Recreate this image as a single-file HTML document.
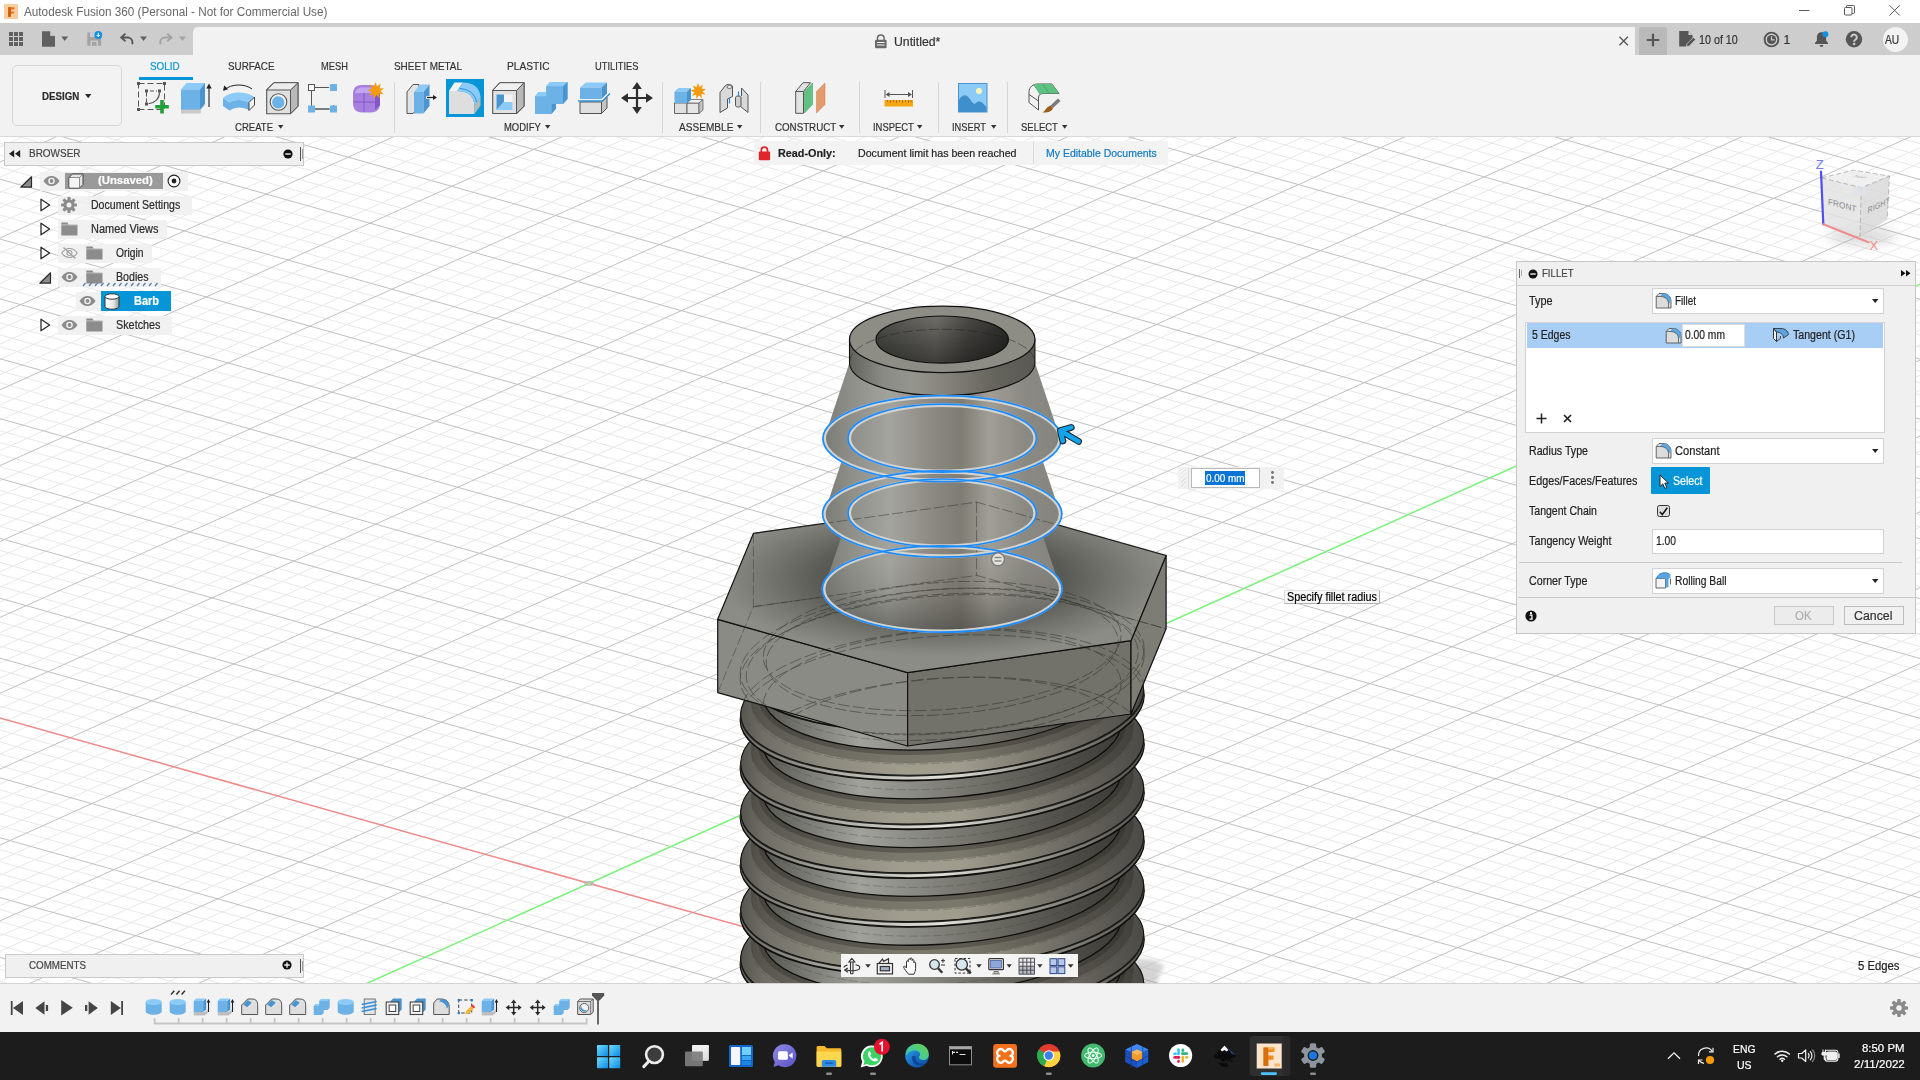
<!DOCTYPE html>
<html><head><meta charset="utf-8"><title>Autodesk Fusion 360</title>
<style>
html,body{margin:0;padding:0;width:1920px;height:1080px;overflow:hidden;background:#fff;font-family:"Liberation Sans",sans-serif;font-size:12px;color:#333}
*{box-sizing:border-box}
.abs{position:absolute}
#titlebar{position:absolute;left:0;top:0;width:1920px;height:23px;background:#fff}
#tabbar{position:absolute;left:0;top:23px;width:1920px;height:32px;background:#cdcdcd}
#toolbar{position:absolute;left:0;top:55px;width:1920px;height:82px;background:#f2f2f2;border-bottom:1px solid #d9d9d9}
#timeline{position:absolute;left:0;top:983px;width:1920px;height:49px;background:#f2f2f2;box-shadow:inset 0 1px 0 #d4d4d4}
#taskbar{position:absolute;left:0;top:1032px;width:1920px;height:48px;background:#1c1c1c}
.t{position:absolute;white-space:nowrap;transform-origin:0 0;display:block;-webkit-text-stroke:.2px currentColor}
.ic{position:absolute;overflow:visible}
.sep{position:absolute;width:1px;background:#d6d6d6;top:82px;height:51px}

</style></head><body>
<svg id="scene" width="1920" height="1080" viewBox="0 0 1920 1080" style="position:absolute;left:0;top:0">
<path d="M-2.0 980.9L12.8 985.0M-2.0 968.9L55.4 985.0M-2.0 944.9L140.7 985.0M-2.0 933.0L183.3 985.0M-2.0 921.0L225.9 985.0M-2.0 909.0L268.6 985.0M-2.0 885.1L353.9 985.0M-2.0 873.1L396.5 985.0M-2.0 861.1L439.1 985.0M-2.0 849.1L481.8 985.0M-2.0 825.2L567.0 985.0M-2.0 813.2L609.7 985.0M-2.0 801.2L652.3 985.0M-2.0 789.3L695.0 985.0M-2.0 765.3L780.2 985.0M-2.0 753.4L822.9 985.0M-2.0 741.4L865.5 985.0M-2.0 729.4L908.1 985.0M-2.0 705.5L993.4 985.0M-2.0 693.5L1036.1 985.0M-2.0 681.5L1078.7 985.0M-2.0 669.5L1121.3 985.0M-2.0 645.6L1206.6 985.0M-2.0 633.6L1249.3 985.0M-2.0 621.6L1291.9 985.0M-2.0 609.7L1334.5 985.0M-2.0 585.7L1419.8 985.0M-2.0 573.7L1462.4 985.0M-2.0 561.8L1505.1 985.0M-2.0 549.8L1547.7 985.0M-2.0 525.8L1633.0 985.0M-2.0 513.9L1675.6 985.0M-2.0 501.9L1718.3 985.0M-2.0 489.9L1760.9 985.0M-2.0 466.0L1846.2 985.0M-2.0 454.0L1888.8 985.0M-2.0 442.0L1922.0 982.3M-2.0 430.1L1922.0 970.4M-2.0 406.1L1922.0 946.4M-2.0 394.1L1922.0 934.4M-2.0 382.2L1922.0 922.5M-2.0 370.2L1922.0 910.5M-2.0 346.2L1922.0 886.6M-2.0 334.3L1922.0 874.6M-2.0 322.3L1922.0 862.6M-2.0 310.3L1922.0 850.6M-2.0 286.4L1922.0 826.7M-2.0 274.4L1922.0 814.7M-2.0 262.4L1922.0 802.7M-2.0 250.4L1922.0 790.8M-2.0 226.5L1922.0 766.8M-2.0 214.5L1922.0 754.8M-2.0 202.5L1922.0 742.9M-2.0 190.6L1922.0 730.9M-2.0 166.6L1922.0 706.9M-2.0 154.7L1922.0 695.0M-2.0 142.7L1922.0 683.0M9.7 134.0L1922.0 671.0M95.0 134.0L1922.0 647.1M137.6 134.0L1922.0 635.1M180.3 134.0L1922.0 623.1M222.9 134.0L1922.0 611.1M308.2 134.0L1922.0 587.2M350.8 134.0L1922.0 575.2M393.5 134.0L1922.0 563.3M436.1 134.0L1922.0 551.3M521.4 134.0L1922.0 527.3M564.0 134.0L1922.0 515.4M606.7 134.0L1922.0 503.4M649.3 134.0L1922.0 491.4M734.6 134.0L1922.0 467.5M777.2 134.0L1922.0 455.5M819.9 134.0L1922.0 443.5M862.5 134.0L1922.0 431.5M947.8 134.0L1922.0 407.6M990.4 134.0L1922.0 395.6M1033.0 134.0L1922.0 383.6M1075.7 134.0L1922.0 371.7M1161.0 134.0L1922.0 347.7M1203.6 134.0L1922.0 335.7M1246.2 134.0L1922.0 323.8M1288.9 134.0L1922.0 311.8M1374.1 134.0L1922.0 287.9M1416.8 134.0L1922.0 275.9M1459.4 134.0L1922.0 263.9M1502.1 134.0L1922.0 251.9M1587.3 134.0L1922.0 228.0M1630.0 134.0L1922.0 216.0M1672.6 134.0L1922.0 204.0M1715.3 134.0L1922.0 192.1M1800.5 134.0L1922.0 168.1M1843.2 134.0L1922.0 156.1M1885.8 134.0L1922.0 144.2M-2.0 147.9L28.8 134.0M-2.0 178.2L96.2 134.0M-2.0 193.4L129.9 134.0M-2.0 208.6L163.6 134.0M-2.0 223.7L197.3 134.0M-2.0 254.1L264.7 134.0M-2.0 269.3L298.5 134.0M-2.0 284.4L332.2 134.0M-2.0 299.6L365.9 134.0M-2.0 330.0L433.3 134.0M-2.0 345.1L467.0 134.0M-2.0 360.3L500.7 134.0M-2.0 375.5L534.4 134.0M-2.0 405.8L601.9 134.0M-2.0 421.0L635.6 134.0M-2.0 436.2L669.3 134.0M-2.0 451.4L703.0 134.0M-2.0 481.7L770.4 134.0M-2.0 496.9L804.1 134.0M-2.0 512.1L837.8 134.0M-2.0 527.3L871.5 134.0M-2.0 557.6L939.0 134.0M-2.0 572.8L972.7 134.0M-2.0 588.0L1006.4 134.0M-2.0 603.1L1040.1 134.0M-2.0 633.5L1107.5 134.0M-2.0 648.7L1141.2 134.0M-2.0 663.8L1174.9 134.0M-2.0 679.0L1208.6 134.0M-2.0 709.4L1276.1 134.0M-2.0 724.5L1309.8 134.0M-2.0 739.7L1343.5 134.0M-2.0 754.9L1377.2 134.0M-2.0 785.2L1444.6 134.0M-2.0 800.4L1478.3 134.0M-2.0 815.6L1512.0 134.0M-2.0 830.8L1545.7 134.0M-2.0 861.1L1613.2 134.0M-2.0 876.3L1646.9 134.0M-2.0 891.5L1680.6 134.0M-2.0 906.6L1714.3 134.0M-2.0 937.0L1781.7 134.0M-2.0 952.2L1815.4 134.0M-2.0 967.3L1849.1 134.0M-2.0 982.5L1882.8 134.0M59.9 985.0L1922.0 146.7M93.6 985.0L1922.0 161.9M127.3 985.0L1922.0 177.1M161.1 985.0L1922.0 192.3M228.5 985.0L1922.0 222.6M262.2 985.0L1922.0 237.8M295.9 985.0L1922.0 253.0M329.6 985.0L1922.0 268.1M397.0 985.0L1922.0 298.5M430.7 985.0L1922.0 313.7M464.4 985.0L1922.0 328.8M498.2 985.0L1922.0 344.0M565.6 985.0L1922.0 374.4M599.3 985.0L1922.0 389.5M633.0 985.0L1922.0 404.7M666.7 985.0L1922.0 419.9M734.1 985.0L1922.0 450.2M767.8 985.0L1922.0 465.4M801.5 985.0L1922.0 480.6M835.3 985.0L1922.0 495.8M902.7 985.0L1922.0 526.1M936.4 985.0L1922.0 541.3M970.1 985.0L1922.0 556.5M1003.8 985.0L1922.0 571.6M1071.2 985.0L1922.0 602.0M1104.9 985.0L1922.0 617.2M1138.7 985.0L1922.0 632.3M1172.4 985.0L1922.0 647.5M1239.8 985.0L1922.0 677.9M1273.5 985.0L1922.0 693.1M1307.2 985.0L1922.0 708.2M1340.9 985.0L1922.0 723.4M1408.3 985.0L1922.0 753.8M1442.0 985.0L1922.0 768.9M1475.8 985.0L1922.0 784.1M1509.5 985.0L1922.0 799.3M1576.9 985.0L1922.0 829.6M1610.6 985.0L1922.0 844.8M1644.3 985.0L1922.0 860.0M1678.0 985.0L1922.0 875.2M1745.4 985.0L1922.0 905.5M1779.1 985.0L1922.0 920.7M1812.9 985.0L1922.0 935.9M1846.6 985.0L1922.0 951.0M1914.0 985.0L1922.0 981.4" stroke="#e8e8e8" stroke-width="1" fill="none"/>
<path d="M-2.0 956.9L98.0 985.0M-2.0 897.0L311.2 985.0M-2.0 837.2L524.4 985.0M-2.0 777.3L737.6 985.0M-2.0 657.6L1164.0 985.0M-2.0 597.7L1377.2 985.0M-2.0 537.8L1590.4 985.0M-2.0 478.0L1803.5 985.0M-2.0 418.1L1922.0 958.4M-2.0 358.2L1922.0 898.5M-2.0 298.3L1922.0 838.7M-2.0 238.5L1922.0 778.8M-2.0 178.6L1922.0 718.9M52.4 134.0L1922.0 659.0M265.6 134.0L1922.0 599.2M478.7 134.0L1922.0 539.3M691.9 134.0L1922.0 479.4M905.1 134.0L1922.0 419.6M1118.3 134.0L1922.0 359.7M1331.5 134.0L1922.0 299.8M1544.7 134.0L1922.0 240.0M1757.9 134.0L1922.0 180.1M-2.0 163.0L62.5 134.0M-2.0 238.9L231.0 134.0M-2.0 314.8L399.6 134.0M-2.0 390.7L568.1 134.0M-2.0 466.5L736.7 134.0M-2.0 542.4L905.2 134.0M-2.0 618.3L1073.8 134.0M-2.0 694.2L1242.3 134.0M-2.0 770.1L1410.9 134.0M-2.0 845.9L1579.5 134.0M-2.0 921.8L1748.0 134.0M26.2 985.0L1916.6 134.0M194.8 985.0L1922.0 207.4M531.9 985.0L1922.0 359.2M700.4 985.0L1922.0 435.1M869.0 985.0L1922.0 510.9M1037.5 985.0L1922.0 586.8M1206.1 985.0L1922.0 662.7M1374.6 985.0L1922.0 738.6M1543.2 985.0L1922.0 814.5M1711.7 985.0L1922.0 890.3M1880.3 985.0L1922.0 966.2" stroke="#c0c0c0" stroke-width="1" fill="none"/>
<path d="M-2.0 717.4L950.8 985.0" stroke="#f08888" stroke-width="1.5" fill="none"/>
<path d="M363.3 985.0L1922.0 283.3" stroke="#7cf27c" stroke-width="1.5" fill="none"/>
<ellipse cx="589" cy="883.4" rx="4.2" ry="1.8" fill="none" stroke="#b5b5b5" stroke-width="1.2"/>
<defs>
<linearGradient id="gBody" gradientUnits="userSpaceOnUse" x1="824" y1="0" x2="1060" y2="0">
<stop offset="0" stop-color="#7b7b76"/><stop offset=".10" stop-color="#8d8d88"/><stop offset=".28" stop-color="#a4a49f"/>
<stop offset=".46" stop-color="#8b8981"/><stop offset=".58" stop-color="#7f7c74"/><stop offset=".70" stop-color="#a09e96"/>
<stop offset=".85" stop-color="#8a8983"/><stop offset="1" stop-color="#85857f"/></linearGradient>
<linearGradient id="gCyl" gradientUnits="userSpaceOnUse" x1="849" y1="0" x2="1035" y2="0">
<stop offset="0" stop-color="#62625c"/><stop offset=".18" stop-color="#8a8a84"/><stop offset=".34" stop-color="#95958f"/>
<stop offset=".55" stop-color="#817f77"/><stop offset=".78" stop-color="#65645d"/><stop offset="1" stop-color="#595853"/></linearGradient>
<linearGradient id="gHole" gradientUnits="userSpaceOnUse" x1="876" y1="0" x2="1009" y2="0">
<stop offset="0" stop-color="#4f4f4b"/><stop offset=".45" stop-color="#6f6e68"/><stop offset=".7" stop-color="#4a4945"/><stop offset="1" stop-color="#2d2d2a"/></linearGradient>
<linearGradient id="gHoleV" x1="0" y1="0" x2="0" y2="1">
<stop offset="0" stop-color="#000" stop-opacity="0"/><stop offset="1" stop-color="#000" stop-opacity=".45"/></linearGradient>
<radialGradient id="gAO" gradientUnits="userSpaceOnUse" cx="942" cy="578" r="225" gradientTransform="translate(0 375.7) scale(1 .35)">
<stop offset="0" stop-color="#3e3e3a" stop-opacity=".9"/><stop offset=".55" stop-color="#4a4a46" stop-opacity=".75"/><stop offset="1" stop-color="#55554f" stop-opacity="0"/></radialGradient>
<linearGradient id="gThA" gradientUnits="userSpaceOnUse" x1="740" y1="0" x2="1144" y2="0">
<stop offset="0" stop-color="#55544e"/><stop offset=".06" stop-color="#706e66"/><stop offset=".2" stop-color="#8a877c"/><stop offset=".4" stop-color="#a09c8e"/><stop offset=".55" stop-color="#9f9b8d"/>
<stop offset=".7" stop-color="#817e73"/><stop offset=".85" stop-color="#65635c"/><stop offset="1" stop-color="#4b4a45"/></linearGradient>
<linearGradient id="gThB" gradientUnits="userSpaceOnUse" x1="763" y1="0" x2="1121" y2="0">
<stop offset="0" stop-color="#55554f"/><stop offset=".1" stop-color="#74746e"/><stop offset=".27" stop-color="#a1a19c"/><stop offset=".45" stop-color="#878781"/>
<stop offset=".62" stop-color="#6e6d66"/><stop offset=".8" stop-color="#55544e"/><stop offset="1" stop-color="#3c3b37"/></linearGradient>
<linearGradient id="gCrest" gradientUnits="userSpaceOnUse" x1="740" y1="0" x2="1144" y2="0">
<stop offset="0" stop-color="#6a6964"/><stop offset=".25" stop-color="#b0afa8"/><stop offset=".5" stop-color="#e2e1da"/><stop offset=".72" stop-color="#9a9990"/><stop offset="1" stop-color="#55544f"/></linearGradient>
<filter id="blur2" x="-20%" y="-20%" width="140%" height="140%"><feGaussianBlur stdDeviation="2.2"/></filter>
<filter id="blur6" x="-20%" y="-50%" width="140%" height="200%"><feGaussianBlur stdDeviation="6"/></filter>
<clipPath id="canvasClip"><rect x="0" y="137" width="1920" height="846"/></clipPath>
<linearGradient id="gBaseAO" gradientUnits="userSpaceOnUse" x1="0" y1="560" x2="0" y2="631"><stop offset="0" stop-color="#33332f" stop-opacity="0"/><stop offset=".45" stop-color="#33332f" stop-opacity=".12"/><stop offset="1" stop-color="#33332f" stop-opacity=".5"/></linearGradient>
<clipPath id="hexSil"><path d="M753.4 533.4L976.6 502.1L1166.1 555.5L1166.1 628.8L1131 714L907.6 746L717.7 692.6L717.7 619.3Z"/></clipPath>
<clipPath id="hexTop"><path d="M753.4 533.4L976.6 502.1L1166.1 555.5L1131 640.7L907.6 672.7L717.7 619.3Z"/></clipPath>
</defs>
<g clip-path="url(#canvasClip)">
<path d="M1125 957L1154 960L1165 966L1159 975L1156 990L1125 990Z" fill="#9c9c9c" opacity=".42" filter="url(#blur2)"/>
<g transform="translate(0 56.97) skewY(-3.46)">
<ellipse cx="942.2" cy="1000.5" rx="202.0" ry="72.0" fill="#1f1f1d" stroke="#0e0e0d" stroke-width="1.3"/>
<ellipse cx="942.2" cy="999.4" rx="201.6" ry="71.9" fill="url(#gCrest)"/>
<ellipse cx="942.2" cy="996.4" rx="202.0" ry="72.0" fill="#2b2b28"/>
<ellipse cx="942.2" cy="995.2" rx="201.5" ry="71.8" fill="url(#gThA)" stroke="#141412" stroke-width="1.1"/>
<ellipse cx="942.2" cy="981.2" rx="184.0" ry="66.2" fill="none" stroke="#24231f" stroke-width="15" opacity=".3"/>
<ellipse cx="942.2" cy="979.2" rx="181.0" ry="64.7" fill="none" stroke="#24231f" stroke-width="6" opacity=".32"/>
<ellipse cx="942.2" cy="988.2" rx="190.0" ry="67.6" fill="none" stroke="#3a3a36" stroke-width=".6" stroke-dasharray="9 3" opacity=".5"/>
<path d="M763.2 938.2 L763.2 978.2 A179.0 63.7 0 0 0 1121.2 978.2 L1121.2 938.2 Z" fill="url(#gThB)" stroke="#0e0e0d" stroke-width="1.3"/>
<path d="M763.2 969.2 A179.0 63.7 0 0 0 1121.2 969.2" fill="none" stroke="#3a3a36" stroke-width=".6" stroke-dasharray="9 3" opacity=".5"/>
<ellipse cx="942.2" cy="951.7" rx="202.0" ry="72.0" fill="#1f1f1d" stroke="#0e0e0d" stroke-width="1.3"/>
<ellipse cx="942.2" cy="950.6" rx="201.6" ry="71.9" fill="url(#gCrest)"/>
<ellipse cx="942.2" cy="947.6" rx="202.0" ry="72.0" fill="#2b2b28"/>
<ellipse cx="942.2" cy="946.4" rx="201.5" ry="71.8" fill="url(#gThA)" stroke="#141412" stroke-width="1.1"/>
<ellipse cx="942.2" cy="932.4" rx="184.0" ry="66.2" fill="none" stroke="#24231f" stroke-width="15" opacity=".3"/>
<ellipse cx="942.2" cy="930.4" rx="181.0" ry="64.7" fill="none" stroke="#24231f" stroke-width="6" opacity=".32"/>
<ellipse cx="942.2" cy="939.4" rx="190.0" ry="67.6" fill="none" stroke="#3a3a36" stroke-width=".6" stroke-dasharray="9 3" opacity=".5"/>
<path d="M763.2 889.4 L763.2 929.4 A179.0 63.7 0 0 0 1121.2 929.4 L1121.2 889.4 Z" fill="url(#gThB)" stroke="#0e0e0d" stroke-width="1.3"/>
<path d="M763.2 920.4 A179.0 63.7 0 0 0 1121.2 920.4" fill="none" stroke="#3a3a36" stroke-width=".6" stroke-dasharray="9 3" opacity=".5"/>
<ellipse cx="942.2" cy="902.9" rx="202.0" ry="72.0" fill="#1f1f1d" stroke="#0e0e0d" stroke-width="1.3"/>
<ellipse cx="942.2" cy="901.8" rx="201.6" ry="71.9" fill="url(#gCrest)"/>
<ellipse cx="942.2" cy="898.8" rx="202.0" ry="72.0" fill="#2b2b28"/>
<ellipse cx="942.2" cy="897.6" rx="201.5" ry="71.8" fill="url(#gThA)" stroke="#141412" stroke-width="1.1"/>
<ellipse cx="942.2" cy="883.6" rx="184.0" ry="66.2" fill="none" stroke="#24231f" stroke-width="15" opacity=".3"/>
<ellipse cx="942.2" cy="881.6" rx="181.0" ry="64.7" fill="none" stroke="#24231f" stroke-width="6" opacity=".32"/>
<ellipse cx="942.2" cy="890.6" rx="190.0" ry="67.6" fill="none" stroke="#3a3a36" stroke-width=".6" stroke-dasharray="9 3" opacity=".5"/>
<path d="M763.2 840.6 L763.2 880.6 A179.0 63.7 0 0 0 1121.2 880.6 L1121.2 840.6 Z" fill="url(#gThB)" stroke="#0e0e0d" stroke-width="1.3"/>
<path d="M763.2 871.6 A179.0 63.7 0 0 0 1121.2 871.6" fill="none" stroke="#3a3a36" stroke-width=".6" stroke-dasharray="9 3" opacity=".5"/>
<ellipse cx="942.2" cy="854.1" rx="202.0" ry="72.0" fill="#1f1f1d" stroke="#0e0e0d" stroke-width="1.3"/>
<ellipse cx="942.2" cy="853.0" rx="201.6" ry="71.9" fill="url(#gCrest)"/>
<ellipse cx="942.2" cy="850.0" rx="202.0" ry="72.0" fill="#2b2b28"/>
<ellipse cx="942.2" cy="848.8" rx="201.5" ry="71.8" fill="url(#gThA)" stroke="#141412" stroke-width="1.1"/>
<ellipse cx="942.2" cy="834.8" rx="184.0" ry="66.2" fill="none" stroke="#24231f" stroke-width="15" opacity=".3"/>
<ellipse cx="942.2" cy="832.8" rx="181.0" ry="64.7" fill="none" stroke="#24231f" stroke-width="6" opacity=".32"/>
<ellipse cx="942.2" cy="841.8" rx="190.0" ry="67.6" fill="none" stroke="#3a3a36" stroke-width=".6" stroke-dasharray="9 3" opacity=".5"/>
<path d="M763.2 791.8 L763.2 831.8 A179.0 63.7 0 0 0 1121.2 831.8 L1121.2 791.8 Z" fill="url(#gThB)" stroke="#0e0e0d" stroke-width="1.3"/>
<path d="M763.2 822.8 A179.0 63.7 0 0 0 1121.2 822.8" fill="none" stroke="#3a3a36" stroke-width=".6" stroke-dasharray="9 3" opacity=".5"/>
<ellipse cx="942.2" cy="805.3" rx="202.0" ry="72.0" fill="#1f1f1d" stroke="#0e0e0d" stroke-width="1.3"/>
<ellipse cx="942.2" cy="804.2" rx="201.6" ry="71.9" fill="url(#gCrest)"/>
<ellipse cx="942.2" cy="801.2" rx="202.0" ry="72.0" fill="#2b2b28"/>
<ellipse cx="942.2" cy="800.0" rx="201.5" ry="71.8" fill="url(#gThA)" stroke="#141412" stroke-width="1.1"/>
<ellipse cx="942.2" cy="786.0" rx="184.0" ry="66.2" fill="none" stroke="#24231f" stroke-width="15" opacity=".3"/>
<ellipse cx="942.2" cy="784.0" rx="181.0" ry="64.7" fill="none" stroke="#24231f" stroke-width="6" opacity=".32"/>
<ellipse cx="942.2" cy="793.0" rx="190.0" ry="67.6" fill="none" stroke="#3a3a36" stroke-width=".6" stroke-dasharray="9 3" opacity=".5"/>
<path d="M763.2 743.0 L763.2 783.0 A179.0 63.7 0 0 0 1121.2 783.0 L1121.2 743.0 Z" fill="url(#gThB)" stroke="#0e0e0d" stroke-width="1.3"/>
<path d="M763.2 774.0 A179.0 63.7 0 0 0 1121.2 774.0" fill="none" stroke="#3a3a36" stroke-width=".6" stroke-dasharray="9 3" opacity=".5"/>
<ellipse cx="942.2" cy="756.5" rx="202.0" ry="72.0" fill="#1f1f1d" stroke="#0e0e0d" stroke-width="1.3"/>
<ellipse cx="942.2" cy="755.4" rx="201.6" ry="71.9" fill="url(#gCrest)"/>
<ellipse cx="942.2" cy="752.4" rx="202.0" ry="72.0" fill="#2b2b28"/>
<ellipse cx="942.2" cy="751.2" rx="201.5" ry="71.8" fill="url(#gThA)" stroke="#141412" stroke-width="1.1"/>
<ellipse cx="942.2" cy="737.2" rx="184.0" ry="66.2" fill="none" stroke="#24231f" stroke-width="15" opacity=".3"/>
<ellipse cx="942.2" cy="735.2" rx="181.0" ry="64.7" fill="none" stroke="#24231f" stroke-width="6" opacity=".32"/>
<ellipse cx="942.2" cy="744.2" rx="190.0" ry="67.6" fill="none" stroke="#3a3a36" stroke-width=".6" stroke-dasharray="9 3" opacity=".5"/>
<path d="M763.2 694.2 L763.2 734.2 A179.0 63.7 0 0 0 1121.2 734.2 L1121.2 694.2 Z" fill="url(#gThB)" stroke="#0e0e0d" stroke-width="1.3"/>
<path d="M763.2 725.2 A179.0 63.7 0 0 0 1121.2 725.2" fill="none" stroke="#3a3a36" stroke-width=".6" stroke-dasharray="9 3" opacity=".5"/>
<ellipse cx="942.2" cy="707.7" rx="202.0" ry="72.0" fill="#1f1f1d" stroke="#0e0e0d" stroke-width="1.3"/>
<ellipse cx="942.2" cy="706.6" rx="201.6" ry="71.9" fill="url(#gCrest)"/>
<ellipse cx="942.2" cy="703.6" rx="202.0" ry="72.0" fill="#2b2b28"/>
<ellipse cx="942.2" cy="702.4" rx="201.5" ry="71.8" fill="url(#gThA)" stroke="#141412" stroke-width="1.1"/>
<ellipse cx="942.2" cy="688.4" rx="184.0" ry="66.2" fill="none" stroke="#24231f" stroke-width="15" opacity=".3"/>
<ellipse cx="942.2" cy="686.4" rx="181.0" ry="64.7" fill="none" stroke="#24231f" stroke-width="6" opacity=".32"/>
<ellipse cx="942.2" cy="695.4" rx="190.0" ry="67.6" fill="none" stroke="#3a3a36" stroke-width=".6" stroke-dasharray="9 3" opacity=".5"/>
<path d="M763.2 645.4 L763.2 685.4 A179.0 63.7 0 0 0 1121.2 685.4 L1121.2 645.4 Z" fill="url(#gThB)" stroke="#0e0e0d" stroke-width="1.3"/>
<path d="M763.2 676.4 A179.0 63.7 0 0 0 1121.2 676.4" fill="none" stroke="#3a3a36" stroke-width=".6" stroke-dasharray="9 3" opacity=".5"/>
<ellipse cx="942.2" cy="658.9" rx="202.0" ry="72.0" fill="#1f1f1d" stroke="#0e0e0d" stroke-width="1.3"/>
<ellipse cx="942.2" cy="657.8" rx="201.6" ry="71.9" fill="url(#gCrest)"/>
<ellipse cx="942.2" cy="654.8" rx="202.0" ry="72.0" fill="#2b2b28"/>
<ellipse cx="942.2" cy="653.6" rx="201.5" ry="71.8" fill="url(#gThA)" stroke="#141412" stroke-width="1.1"/>
<ellipse cx="942.2" cy="639.6" rx="184.0" ry="66.2" fill="none" stroke="#24231f" stroke-width="15" opacity=".3"/>
<ellipse cx="942.2" cy="637.6" rx="181.0" ry="64.7" fill="none" stroke="#24231f" stroke-width="6" opacity=".32"/>
<ellipse cx="942.2" cy="646.6" rx="190.0" ry="67.6" fill="none" stroke="#3a3a36" stroke-width=".6" stroke-dasharray="9 3" opacity=".5"/>
<path d="M763.2 596.6 L763.2 636.6 A179.0 63.7 0 0 0 1121.2 636.6 L1121.2 596.6 Z" fill="url(#gThB)" stroke="#0e0e0d" stroke-width="1.3"/>
<path d="M763.2 627.6 A179.0 63.7 0 0 0 1121.2 627.6" fill="none" stroke="#3a3a36" stroke-width=".6" stroke-dasharray="9 3" opacity=".5"/>
</g>
<path d="M717.7 619.3 L907.6 672.7 L907.6 746.0 L717.7 692.6 Z" fill="#8b8b85" stroke="#111" stroke-width="1.2" stroke-linejoin="round"/>
<path d="M907.6 672.7 L1131.0 640.7 L1131.0 714.0 L907.6 746.0 Z" fill="#72716a" stroke="#111" stroke-width="1.2" stroke-linejoin="round"/>
<path d="M1131.0 640.7 L1166.1 555.5 L1166.1 628.8 L1131.0 714.0 Z" fill="#7d7c75" stroke="#111" stroke-width="1.2" stroke-linejoin="round"/>
<path d="M753.4 533.4 L976.6 502.1 L1166.1 555.5 L1131.0 640.7 L907.6 672.7 L717.7 619.3 Z" fill="#8c8c86" stroke="#111" stroke-width="1.2" stroke-linejoin="round"/>
<g clip-path="url(#hexTop)"><ellipse cx="942" cy="578" rx="225" ry="79" fill="url(#gAO)"/></g>
<path d="M717.7 692.6L753.4 606.7L976.6 575.4M976.6 575.4L1166.1 628.8M753.4 533.4L753.4 606.7M976.6 502.1L976.6 575.4" stroke="#3c3c38" stroke-width=".7" stroke-dasharray="10 3" fill="none" opacity=".7"/>
<path d="M849.3 513.0 L823.7 589.0 A118.5 42.2 0 0 0 1060.7 589.0 L1035.1 513.0 A92.9 33.1 0 0 0 849.3 513.0 Z" fill="url(#gBody)"/>
<path d="M849.3 438.3 L824.0 514.0 A118.2 42.1 0 0 0 1060.4 514.0 L1035.1 438.3 A92.9 33.1 0 0 0 849.3 438.3 Z" fill="url(#gBody)"/>
<path d="M849.5 362.4 L824.2 438.6 A118.0 42.0 0 0 0 1060.2 438.6 L1034.9 362.4 A92.7 33.0 0 0 0 849.5 362.4 Z" fill="url(#gBody)"/>
<path d="M849.5 339.4 L849.5 362.4 A92.7 33.2 0 0 0 1034.9 362.4 L1034.9 339.4 Z" fill="url(#gCyl)" stroke="#111" stroke-width="1.1"/>
<ellipse cx="942.2" cy="339.4" rx="92.7" ry="33.2" fill="#8d8d86" stroke="#111" stroke-width="1.2"/>
<ellipse cx="942.2" cy="339.6" rx="66.2" ry="23.6" fill="url(#gHole)"/>
<ellipse cx="942.2" cy="339.6" rx="66.2" ry="23.6" fill="url(#gHoleV)" stroke="#111" stroke-width="1.2"/>
<path d="M849.5 362.4 A92.7 33.2 0 0 1 1034.9 362.4" fill="none" stroke="#1c1c1a" stroke-width=".7" stroke-dasharray="10 3" opacity=".65"/>
<ellipse cx="942.2" cy="589" rx="117.5" ry="41.800" fill="url(#gBaseAO)"/>
<g clip-path="url(#hexSil)"><g transform="translate(0 56.97) skewY(-3.46)" fill="none" stroke="#24241f" stroke-width=".8" stroke-dasharray="12 3.500" opacity=".55">
<ellipse cx="942.2" cy="661.0" rx="202.0" ry="71.9" />
<ellipse cx="942.2" cy="667.5" rx="202.0" ry="71.9" />
<ellipse cx="942.2" cy="664.0" rx="196.0" ry="69.8" />
<ellipse cx="942.2" cy="646.0" rx="179.0" ry="63.7" />
<ellipse cx="942.2" cy="652.0" rx="176.0" ry="62.7" />
<ellipse cx="942.2" cy="694.0" rx="179.0" ry="63.7" />
<ellipse cx="942.2" cy="701.4" rx="202.0" ry="71.9" />
<ellipse cx="942.2" cy="707.7" rx="202.0" ry="71.9" />
<ellipse cx="942.2" cy="742.0" rx="179.0" ry="63.7" />
<ellipse cx="942.2" cy="750.0" rx="202.0" ry="71.9" />
</g></g>
<path d="M753.4 533.4L976.6 502.1L1166.1 555.5M976.6 502.1L976.6 575.4M753.4 606.7L976.6 575.4L1166.1 628.8" stroke="#2e2e2b" stroke-width=".8" stroke-dasharray="11 3" fill="none" opacity=".6"/>
<ellipse cx="942.2" cy="438.6" rx="118.0" ry="42.0" fill="none" stroke="#d2d2ce" stroke-width="3.6"/>
<ellipse cx="942.2" cy="438.2" rx="92.9" ry="33.1" fill="none" stroke="#d2d2ce" stroke-width="3.6"/>
<ellipse cx="942.2" cy="514.0" rx="118.3" ry="42.1" fill="none" stroke="#d2d2ce" stroke-width="3.6"/>
<ellipse cx="942.2" cy="513.0" rx="92.9" ry="33.1" fill="none" stroke="#d2d2ce" stroke-width="3.6"/>
<ellipse cx="942.2" cy="589.0" rx="118.6" ry="42.2" fill="none" stroke="#d2d2ce" stroke-width="3.6"/>
<ellipse cx="942.2" cy="438.6" rx="119.3" ry="43.0" fill="none" stroke="#1a8cff" stroke-width="1.7"/>
<ellipse cx="942.2" cy="438.2" rx="94.2" ry="34.0" fill="none" stroke="#1a8cff" stroke-width="1.7"/>
<ellipse cx="942.2" cy="514.0" rx="119.6" ry="43.1" fill="none" stroke="#1a8cff" stroke-width="1.7"/>
<ellipse cx="942.2" cy="513.0" rx="94.2" ry="34.0" fill="none" stroke="#1a8cff" stroke-width="1.7"/>
<ellipse cx="942.2" cy="589.0" rx="119.9" ry="43.2" fill="none" stroke="#1a8cff" stroke-width="1.7"/>
</g>
<ellipse cx="1862" cy="236" rx="34" ry="9" fill="#b0b0b0" opacity=".45" filter="url(#blur6)"/>
<path d="M1821.500 177.900L1861.300 187.600L1860 236.900L1823.300 224.300Z" fill="#e2e2e2" fill-opacity=".82"/>
<path d="M1861.300 187.600L1889.500 176.100L1887.100 219.500L1860 236.900Z" fill="#d8d8d8" fill-opacity=".82"/>
<path d="M1821.500 177.900L1853.400 170.100L1889.500 176.100L1861.300 187.600Z" fill="#ededed" fill-opacity=".82"/>
<path d="M1821.500 177.900L1861.300 187.600L1889.500 176.100M1861.300 187.600L1860 236.900M1821.500 177.900L1853.400 170.100L1889.500 176.100L1887.100 219.500" fill="none" stroke="#9a9a9a" stroke-width=".8" stroke-dasharray="5 2.500" opacity=".8"/>
<rect x="1853" y="187" width="13" height="9" fill="#dfe3ea" opacity=".8"/>
<text transform="matrix(.93 .245 -.03 1 1828 204.500)" font-family="Liberation Sans, sans-serif" font-size="8.600" fill="#8a8a8a" letter-spacing=".2">FRONT</text>
<text transform="matrix(.82 -.39 -.03 1 1867.500 213.500)" font-family="Liberation Sans, sans-serif" font-size="8.600" fill="#8a8a8a" letter-spacing=".1">RIGHT</text>
<text transform="matrix(.8 .18 -.8 .22 1852 176)" font-family="Liberation Sans, sans-serif" font-size="7" fill="#a4a4a4">TOP</text>
<path d="M1821 171.500L1823.300 224.300" stroke="#4d4df2" stroke-width="2.200" stroke-linecap="round"/>
<path d="M1823.300 224.300L1868.500 242.300" stroke="#ef8f8f" stroke-width="2.200" stroke-linecap="round"/>
<text x="1815.800" y="168.500" font-family="Liberation Sans, sans-serif" font-size="13" fill="#7878f2">Z</text>
<text x="1869.600" y="249.500" font-family="Liberation Sans, sans-serif" font-size="13" fill="#f08c8c">X</text>
<circle cx="998" cy="559.300" r="6.500" fill="#e4e4e0" stroke="#7d7d78" stroke-width="1.400"/><path d="M994.500 557.500h7M994.500 561h7" stroke="#8a8a85" stroke-width="1.400"/>
<path d="M1060.400 430.500L1071.300 427.400M1060.400 430.500L1062.800 441M1061 431L1078.600 441.400" fill="none" stroke="#1b2a33" stroke-width="6.800" stroke-linecap="round" stroke-linejoin="round"/>
<path d="M1060.400 430.500L1071.300 427.400M1060.400 430.500L1062.800 441M1061 431L1078.600 441.400" fill="none" stroke="#12a4ea" stroke-width="4.600" stroke-linecap="round" stroke-linejoin="round"/>
</svg>
<div id="titlebar">
<svg class="ic" style="left:4px;top:4px" width="14" height="15" viewBox="0 0 14 15"><rect x="0" y="0" width="14" height="15" rx="1.5" fill="#f3b16a"/><rect x="0" y="0" width="14" height="15" rx="1.5" fill="#fbe3c6" opacity=".55"/><path d="M4.2 3.2h6.2v2.3H6.9v1.9h3v2.2h-3v3.2H4.2z" fill="#e8731a"/><path d="M4.2 3.2h2.7v9.6H4.2z" fill="#c95d12"/></svg>
<span class="t" style="left:23.60px;top:6.04px;font-size:12.00px;line-height:12.00px;color:#666;transform:scaleX(0.9784);-webkit-text-stroke:0;">Autodesk Fusion 360 (Personal - Not for Commercial Use)</span>

<svg class="ic" style="left:1790px;top:0" width="130" height="23" viewBox="0 0 130 23" fill="none" stroke="#5a5a5a" stroke-width="1">
<path d="M9 10.5h10.5"/><rect x="54.5" y="7.5" width="7.5" height="7.5" rx="1"/><path d="M56.5 7.5v-1.2a.8.8 0 0 1 .8-.8h6.4a.8.8 0 0 1 .8.8v6.4a.8.8 0 0 1-.8.8h-1.5"/><path d="M99.5 5.2l10.3 10.3M109.8 5.2L99.5 15.5"/></svg>
</div>
<div id="tabbar">
<div class="abs" style="left:193px;top:4px;width:1442px;height:28px;background:#f2f2f2;border-radius:5px 0 0 0"></div>
<div class="abs" style="left:1639px;top:4px;width:28px;height:28px;background:#b9b9b9;border-radius:3px 3px 0 0"></div>
<svg class="ic" style="left:0;top:0" width="200" height="32" viewBox="0 23 200 32">
<g fill="#606060"><rect x="9" y="32" width="4" height="4"/><rect x="14" y="32" width="4" height="4"/><rect x="19" y="32" width="4" height="4"/><rect x="9" y="37" width="4" height="4"/><rect x="14" y="37" width="4" height="4"/><rect x="19" y="37" width="4" height="4"/><rect x="9" y="42" width="4" height="4"/><rect x="14" y="42" width="4" height="4"/><rect x="19" y="42" width="4" height="4"/>
<path d="M42 31.2h8.3l4.7 4.7v10.8H42z"/><path d="M61.3 36.5h6.8l-3.4 4.6z"/>
<path d="M140 36.5h7l-3.5 4.6z"/></g>
<path d="M50.6 31.2v4.4h4.4" fill="#cdcdcd" stroke="#cdcdcd" stroke-width=".8"/>
<g fill="#a3a3a3"><path d="M87.3 32.5h11.2l2.7 2.7v10.5H87.3z"/><path d="M179 36.5h7l-3.5 4.6z"/></g>
<rect x="90" y="32.5" width="6" height="4.5" fill="#cdcdcd"/><rect x="90.5" y="40.5" width="7.5" height="5.2" fill="#cdcdcd"/><rect x="92" y="41.8" width="4.5" height="3.9" fill="#a3a3a3"/>
<circle cx="98.3" cy="35" r="3.9" fill="#1490e0"/><path d="M98.3 32.8v3.6M96.7 35l1.6 1.7 1.6-1.7" stroke="#fff" stroke-width="1" fill="none"/>
<path d="M125.5 33.6l-4.3 3.9 4.3 3.9M121.6 37.5h6.2a4.6 4.6 0 0 1 4.6 4.6v2.2" fill="none" stroke="#585858" stroke-width="1.9"/>
<path d="M167.2 33.6l4.3 3.9-4.3 3.9M171.1 37.5h-6.2a4.6 4.6 0 0 0-4.6 4.6v2.2" fill="none" stroke="#a3a3a3" stroke-width="1.9"/>
</svg>
<svg class="ic" style="left:874px;top:11px" width="14" height="15" viewBox="0 0 14 15"><path d="M3.5 6V4.2a3.3 3.3 0 0 1 6.6 0V6" fill="none" stroke="#6a6a6a" stroke-width="1.5"/><rect x="1" y="5.8" width="11.6" height="8.4" rx="1" fill="#6a6a6a"/><path d="M3 8.5h7.6M3 11h7.6" stroke="#f2f2f2" stroke-width="1"/></svg>
<span class="t" style="left:894.30px;top:11.61px;font-size:13.00px;line-height:13.00px;color:#333;transform:scaleX(0.9423);">Untitled*</span>

<svg class="ic" style="left:1618px;top:12px" width="12" height="12" viewBox="0 0 12 12"><path d="M1.5 1.8l8.4 8.4M9.9 1.8L1.5 10.2" stroke="#555" stroke-width="1.3"/></svg>
<svg class="ic" style="left:1646px;top:10px" width="14" height="14" viewBox="0 0 14 14"><path d="M7 .8v12.4M.8 7h12.4" stroke="#555" stroke-width="2.2"/></svg>
<svg class="ic" style="left:1678px;top:7px" width="18" height="18" viewBox="0 0 18 18"><path d="M1.2 1h9.3l4 4v3.6l-6.4 6.6v1.3H1.2z" fill="#555"/><path d="M10.5 1v4h4" fill="#cdcdcd"/><path d="M8.3 16.8l.9-3.2 6.2-6.2 2.2 2.2-6.2 6.3z" fill="#555" stroke="#cdcdcd" stroke-width=".7"/></svg>
<span class="t" style="left:1698.80px;top:10.64px;font-size:12.00px;line-height:12.00px;color:#333;transform:scaleX(0.8943);">10 of 10</span>

<svg class="ic" style="left:1763px;top:8px" width="17" height="17" viewBox="0 0 17 17"><circle cx="8.5" cy="8.5" r="6.9" fill="none" stroke="#555" stroke-width="1.9"/><circle cx="8.5" cy="8.5" r="4.6" fill="#555"/><path d="M8.5 5.2v3.6h3" stroke="#cdcdcd" stroke-width="1.2" fill="none"/></svg>
<span class="t" style="left:1783.60px;top:10.64px;font-size:12.00px;line-height:12.00px;color:#333;">1</span>

<svg class="ic" style="left:1813px;top:7px" width="18" height="18" viewBox="0 0 18 18"><path d="M8.5 2.2c-3 0-4.6 2.3-4.6 5v3.3L2 13v.9h13V13l-1.9-2.5V7.2c0-2.7-1.6-5-4.6-5z" fill="#555"/><path d="M6.6 15h3.8a1.9 1.9 0 0 1-3.8 0z" fill="#555"/><circle cx="12.4" cy="4.2" r="3" fill="#1490e0"/></svg>
<svg class="ic" style="left:1845px;top:7px" width="18" height="18" viewBox="0 0 18 18"><circle cx="9" cy="9.3" r="8.2" fill="#555"/><path d="M6.3 7.3a2.75 2.75 0 1 1 4.3 2.2c-.9.6-1.5 1-1.5 2.2" fill="none" stroke="#cdcdcd" stroke-width="2"/><circle cx="9.1" cy="14" r="1.25" fill="#cdcdcd"/></svg>
<div class="abs" style="left:1882.5px;top:4px;width:25px;height:25px;border-radius:50%;background:#f3f3f3"></div>
<span class="t" style="left:1885.40px;top:10.64px;font-size:12.00px;line-height:12.00px;color:#333;transform:scaleX(0.8517);">AU</span>

</div>
<div id="toolbar">
<div class="abs" style="left:12px;top:10px;width:110px;height:61px;border:1px solid #d6d6d6;border-radius:5px;background:#f3f3f3"></div>
<span class="t" style="left:42.20px;top:35.77px;font-size:11.00px;line-height:11.00px;color:#2b2b2b;font-weight:bold;transform:scaleX(0.8821);">DESIGN</span>

<svg class="ic" style="left:85px;top:39.0px" width="7" height="5" viewBox="0 0 7 5"><path d="M0 0h6.4L3.2 4.2z" fill="#2b2b2b"/></svg>
<span class="t" style="left:150.30px;top:5.49px;font-size:11.60px;line-height:11.60px;color:#0696d7;transform:scaleX(0.8534);">SOLID</span>

<span class="t" style="left:228.20px;top:5.49px;font-size:11.60px;line-height:11.60px;color:#333;transform:scaleX(0.8490);">SURFACE</span>

<span class="t" style="left:321.30px;top:5.49px;font-size:11.60px;line-height:11.60px;color:#333;transform:scaleX(0.8059);">MESH</span>

<span class="t" style="left:394.30px;top:5.49px;font-size:11.60px;line-height:11.60px;color:#333;transform:scaleX(0.8556);">SHEET METAL</span>

<span class="t" style="left:507.00px;top:5.49px;font-size:11.60px;line-height:11.60px;color:#333;transform:scaleX(0.8793);">PLASTIC</span>

<span class="t" style="left:595.00px;top:5.49px;font-size:11.60px;line-height:11.60px;color:#333;transform:scaleX(0.8036);">UTILITIES</span>

<div class="abs" style="left:138.5px;top:21.5px;width:54px;height:3px;background:#0696d7"></div>
<div class="sep" style="left:393.5px;top:27px"></div>
<div class="sep" style="left:662.0px;top:27px"></div>
<div class="sep" style="left:760.0px;top:27px"></div>
<div class="sep" style="left:858.5px;top:27px"></div>
<div class="sep" style="left:937.5px;top:27px"></div>
<div class="sep" style="left:1006.5px;top:27px"></div>
<span class="t" style="left:235.30px;top:67.17px;font-size:11.00px;line-height:11.00px;color:#333;transform:scaleX(0.8676);">CREATE</span>

<svg class="ic" style="left:278.0px;top:70.3px" width="6" height="5" viewBox="0 0 6 5"><path d="M0 0h5.4L2.7 3.8z" fill="#333"/></svg>
<span class="t" style="left:503.50px;top:67.17px;font-size:11.00px;line-height:11.00px;color:#333;transform:scaleX(0.8580);">MODIFY</span>

<svg class="ic" style="left:545.3px;top:70.3px" width="6" height="5" viewBox="0 0 6 5"><path d="M0 0h5.4L2.7 3.8z" fill="#333"/></svg>
<span class="t" style="left:679.20px;top:67.17px;font-size:11.00px;line-height:11.00px;color:#333;transform:scaleX(0.9174);">ASSEMBLE</span>

<svg class="ic" style="left:737.3px;top:70.3px" width="6" height="5" viewBox="0 0 6 5"><path d="M0 0h5.4L2.7 3.8z" fill="#333"/></svg>
<span class="t" style="left:774.50px;top:67.17px;font-size:11.00px;line-height:11.00px;color:#333;transform:scaleX(0.8863);">CONSTRUCT</span>

<svg class="ic" style="left:839.4px;top:70.3px" width="6" height="5" viewBox="0 0 6 5"><path d="M0 0h5.4L2.7 3.8z" fill="#333"/></svg>
<span class="t" style="left:873.20px;top:67.17px;font-size:11.00px;line-height:11.00px;color:#333;transform:scaleX(0.8559);">INSPECT</span>

<svg class="ic" style="left:917.4px;top:70.3px" width="6" height="5" viewBox="0 0 6 5"><path d="M0 0h5.4L2.7 3.8z" fill="#333"/></svg>
<span class="t" style="left:952.20px;top:67.17px;font-size:11.00px;line-height:11.00px;color:#333;transform:scaleX(0.8446);">INSERT</span>

<svg class="ic" style="left:990.5px;top:70.3px" width="6" height="5" viewBox="0 0 6 5"><path d="M0 0h5.4L2.7 3.8z" fill="#333"/></svg>
<span class="t" style="left:1021.40px;top:67.17px;font-size:11.00px;line-height:11.00px;color:#333;transform:scaleX(0.8624);">SELECT</span>

<svg class="ic" style="left:1062.0px;top:70.3px" width="6" height="5" viewBox="0 0 6 5"><path d="M0 0h5.4L2.7 3.8z" fill="#333"/></svg>
<svg class="ic" style="left:137px;top:27px" width="33" height="33" viewBox="0 0 33 33"><rect x="1.5" y="1.5" width="26" height="26" fill="none" stroke="#555" stroke-width="1" stroke-dasharray="6 3"/>
<g fill="#555"><rect x="0" y="0" width="3" height="3"/><rect x="26" y="0" width="3" height="3"/><rect x="0" y="26" width="3" height="3"/><rect x="8" y="7.5" width="3" height="3"/><rect x="21" y="7.5" width="3" height="3"/><rect x="8" y="20.5" width="3" height="3"/></g>
<path d="M9.5 10.5v10M13 9h7" stroke="#555" stroke-width="1" stroke-dasharray="4 2" fill="none"/><path d="M22.5 10.5c0 6-4.5 10.5-11 11.2" stroke="#555" stroke-width="1.1" fill="none"/>
<path d="M25 18v13.5M18.3 24.7h13.5" stroke="#1fa038" stroke-width="3.6"/></svg>
<svg class="ic" style="left:181px;top:27px" width="32" height="33" viewBox="0 0 32 33"><path d="M0 27.5l6-5h18.5l-5 5v3.7H0z" fill="#b5b5b5"/><path d="M0 27.5h19.5v3.7H0z" fill="#c9c9c9"/>
<path d="M0 7.5L5.5 1h18.5L19 7.5z" fill="#8ccaf7"/><path d="M0 7.5h19v20H0z" fill="#6cb2e6"/><path d="M19 7.5L24 1v20.5l-5 6z" fill="#4a94cf"/>
<path d="M28 25V4.5" stroke="#222" stroke-width="1.1"/><path d="M25.3 6.5L28 1.5l2.7 5z" fill="#222"/></svg>
<svg class="ic" style="left:222px;top:29px" width="35" height="30" viewBox="0 0 35 30"><path d="M2.5 6C9 -0.5 23 -0.5 30 5" fill="none" stroke="#222" stroke-width="1"/><path d="M1 6.8l1.2-5.2 4 3.6z" fill="#222"/>
<path d="M1 14c8-7 22-7 31.5-1l-5.5 5.5c-6-3.5-13-3.5-19 0z" fill="#8ccaf7"/><path d="M1 14l6.5 4.5c6-3.5 13-3.5 19.500 0V26c-6-3.500-13.500-3.500-19.500 .5L1 22z" fill="#6cb2e6"/>
<path d="M27 18.500l5.500-5.500v8L27 26.500z" fill="#f4f4f4" stroke="#444" stroke-width="1"/></svg>
<svg class="ic" style="left:266px;top:27px" width="33" height="33" viewBox="0 0 33 33"><path d="M.7 8L8 .7h24v23.500l-7.500 7.500H.7z" fill="#e0e0e0" stroke="#555" stroke-width="1.1" stroke-linejoin="round"/><path d="M24.500 8L32 .7v23.500l-7.500 7.500z" fill="#b9b9b9" stroke="#555" stroke-width="1"/><path d="M.7 8L8 .7h24L24.500 8z" fill="#ececec" stroke="#555" stroke-width="1"/>
<circle cx="12.500" cy="20" r="8.300" fill="#f2f2f2" stroke="#555" stroke-width="1.1"/><circle cx="12.300" cy="20.300" r="6.200" fill="#6cb2e6"/><path d="M11 14.300a6.200 6.200 0 0 1 7.300 7.700a5.500 5.500 0 0 0-7.300-7.700z" fill="#f6f6f6"/></svg>
<svg class="ic" style="left:308px;top:29px" width="30" height="29" viewBox="0 0 30 29"><path d="M3.500 3.500h22v21.500h-22z" fill="none" stroke="#555" stroke-width="1" stroke-dasharray="0"/><rect x="6" y="0" width="16" height="8" fill="#f2f2f2"/><rect x="22" y="7" width="8" height="14" fill="#f2f2f2"/><path d="M7 3.500h14M7 25h14M3.500 7v14" stroke="#555" stroke-width="1"/>
<rect x=".5" y=".5" width="6" height="6" fill="#fff" stroke="#555" stroke-width="1"/><rect x="22" y="0" width="7" height="7" fill="#6cb2e6"/><rect x="0" y="21.500" width="7" height="7" fill="#6cb2e6"/><rect x="22" y="21.500" width="7" height="7" fill="#6cb2e6"/></svg>
<svg class="ic" style="left:351px;top:27px" width="33" height="33" viewBox="0 0 33 33"><path d="M2 12c0-6 3-9 9-9h9c6 0 9 3 9 9v9c0 6-3 9.500-9 9.500h-9c-6 0-9-3.500-9-9.500z" fill="#a77fe0"/><path d="M4 13c0-5 2.500-7.500 7.500-7.500H20c3 0 4.500 1 5.500 2.500L22 11H4z" fill="#c3a6f0"/><path d="M24 11l5-3v15l-5 5z" fill="#8457c8"/>
<path d="M13 11v19M3 20h21" stroke="#8457c8" stroke-width="1"/>
<path d="M24.500 0l1.500 4.300 3.800-2.600-1.200 4.500 4.600.3-3.800 2.500 3.300 3.200-4.600-.4.600 4.600-3.200-3.300-2.600 3.800-.4-4.600-4.400 1.400 2.600-3.800-4.200-1.800 4.400-1.400-2-4.100 4.100 2z" fill="#f39a0e"/></svg>
<svg class="ic" style="left:406px;top:27px" width="32" height="33" viewBox="0 0 32 33"><path d="M1 10L7 2.500h6V24l-6 7.500H1z" fill="#e3e3e3" stroke="#555" stroke-width="1"/><path d="M8 10l6-7.500h9.500L17.500 10z" fill="#8ccaf7"/><path d="M8 10h9.500v21.500H8z" fill="#6cb2e6"/><path d="M17.500 10l6-7.500V24l-6 7.500z" fill="#4a94cf"/>
<path d="M20 15.500h8" stroke="#222" stroke-width="1.1"/><path d="M20 14.200h4v2.600h-4z" fill="#f2f2f2"/><path d="M21 15.500h7" stroke="#222" stroke-width="1.100"/><path d="M27 13l4 2.500-4 2.500z" fill="#222"/></svg>
<svg class="ic" style="left:446px;top:24px" width="38" height="38" viewBox="0 0 38 38"><rect width="38" height="38" fill="#0696d7"/><path d="M3 12l5.500-8.500H17L11 12z" fill="#f4f4f4"/><path d="M3 12h8c10 0 16.500 4 17.500 14.500V35H3z" fill="#dedede"/><path d="M28.500 26.500l6-8.500v8.500l-6 8.500z" fill="#b9b9b9"/>
<path d="M11 12l6-8.500c10 0 17 5 17.500 14.500l-6 8.500C27.500 16 21 12 11 12z" fill="#8ccaf7"/><path d="M13.500 9.500c9 .5 15.500 5 17 13.500" stroke="#2f8fd8" stroke-width="1" fill="none"/></svg>
<svg class="ic" style="left:492px;top:27px" width="33" height="33" viewBox="0 0 33 33"><path d="M.7 8.500L8 .7h24v23.500l-7.500 7.300H.7z" fill="#e2e2e2" stroke="#555" stroke-width="1.1" stroke-linejoin="round"/><path d="M24.500 8.500L32 .7v23.500l-7.500 7.300z" fill="#b9b9b9" stroke="#555" stroke-width="1"/><path d="M.7 8.500L8 .7h24l-7.500 7.800z" fill="#f0f0f0" stroke="#555" stroke-width="1"/>
<path d="M4.500 12.500h16v15.500h-16z" fill="#f4f4f4"/><path d="M4.500 12.500h7.500V20l-7.500 8z" fill="#4a94cf"/><path d="M4.500 28l7.500-8h8.500v8z" fill="#8ccaf7"/></svg>
<svg class="ic" style="left:535px;top:27px" width="33" height="33" viewBox="0 0 33 33"><path d="M0 14.500L3.500 10H11V4.500L15 0h17.500v17L28 22h-7v4.500L16.500 32H0z" fill="#6cb2e6"/><path d="M3.500 10H11V4.500L15 0h17.500L28 4.500H11.500V14.500H0z" fill="#8ccaf7"/><path d="M28 4.500L32.500 0v17L28 22zM16.500 22h4.500v4.500L16.500 32z" fill="#4a94cf"/><path d="M11.500 4.500H28V22H16.500V32H0V14.500h11.500z" fill="#6cb2e6"/></svg>
<svg class="ic" style="left:578px;top:27px" width="33" height="33" viewBox="0 0 33 33"><path d="M2 20h21.500v11.500H2z" fill="#e0e0e0" stroke="#555" stroke-width="1"/><path d="M23.500 20l5.500-5v11l-5.500 5.500z" fill="#c4c4c4" stroke="#555" stroke-width="1"/>
<path d="M2 5.500L8 .5h21l-5.500 5z" fill="#8ccaf7"/><path d="M2 5.500h21.500V17H2z" fill="#6cb2e6"/><path d="M23.500 5.500l5.500-5v11L23.500 17z" fill="#4a94cf"/><path d="M0 19h24.500l7.500-7.500" stroke="#2f8fd8" stroke-width="1.300" fill="none"/></svg>
<svg class="ic" style="left:621px;top:27px" width="33" height="33" viewBox="0 0 33 33"><path d="M16 3v26M3 16h26" stroke="#2e2e2e" stroke-width="2.200"/><path d="M16 0l4.800 7h-9.600zM16 32l4.800-7h-9.600zM0 16l7-4.800v9.600zM32 16l-7-4.800v9.600z" fill="#2e2e2e"/></svg>
<svg class="ic" style="left:674px;top:27px" width="34" height="33" viewBox="0 0 34 33"><path d="M.5 21h12.500v10.500H.5z" fill="#e0e0e0" stroke="#666" stroke-width="1"/><path d="M13 21h12v10.500H13z" fill="#e6e6e6" stroke="#666" stroke-width="1"/><path d="M13 21l4-3.500h12L25 21z" fill="#f2f2f2" stroke="#666" stroke-width=".8"/><path d="M25 21l4-3.500V28l-4 3.500z" fill="#c2c2c2" stroke="#666" stroke-width=".8"/>
<path d="M.5 9.500L4.500 6h12.500L13 9.500z" fill="#8ccaf7"/><path d="M.5 9.500H13V21H.5z" fill="#6cb2e6"/><path d="M13 9.500L17 6v11.500L13 21z" fill="#4a94cf"/>
<path d="M24 1l1.400 4 3.500-2.400-1.100 4.200 4.300.3-3.500 2.400 3 3-4.200-.4.500 4.300-3-3.100-2.400 3.600-.400-4.300-4.100 1.300 2.400-3.600-3.900-1.700 4.100-1.300-1.800-3.800 3.800 1.800z" fill="#f39a0e"/></svg>
<svg class="ic" style="left:719px;top:29px" width="30" height="30" viewBox="0 0 30 30"><path d="M1 8.500L6 2c2-2.500 7.500-2 7.500 1v9.500L8.500 15v9L1 28.500z" fill="#d9d9d9" stroke="#555" stroke-width="1" stroke-linejoin="round"/><ellipse cx="10.500" cy="3" rx="2.500" ry="1.500" fill="#f2f2f2" stroke="#555" stroke-width=".8"/>
<path d="M22.500 4l6.500 7v17.500L21 22v-4.500" fill="#d9d9d9" stroke="#555" stroke-width="1" stroke-linejoin="round"/><path d="M16.500 13.500c0-2 5.500-2 5.500 0v8c0 2-5.500 2-5.500 0z" fill="#cfcfcf" stroke="#555" stroke-width="1"/><path d="M22.500 4v8" stroke="#555" stroke-width="1"/>
<path d="M19.500 7.500v5M10.500 14.500v5" stroke="#2088e0" stroke-width="1.200"/></svg>
<svg class="ic" style="left:795px;top:27px" width="31" height="33" viewBox="0 0 31 33"><path d="M.7 9.500L8 .7h7.500L8.500 9.500v21.800H.7z" fill="#e2e2e2" stroke="#555" stroke-width="1" stroke-linejoin="round"/><path d="M.7 9.500h7.800" stroke="#555" stroke-width="1"/>
<path d="M9.500 9.500L17.500 1v21.500L9.500 31z" fill="#5fc283" stroke="#4aa76c" stroke-width=".6"/><path d="M21.500 9.500L30 1v21.500L21.500 31z" fill="#e49b6b" stroke="#cf8658" stroke-width=".6"/></svg>
<svg class="ic" style="left:884px;top:35px" width="30" height="17" viewBox="0 0 30 17"><path d="M1 0v8M28.500 0v8" stroke="#555" stroke-width="1"/><path d="M3 4.500h23.500" stroke="#555" stroke-width="1"/><path d="M1.500 4.500l4-2.500v5zM28 4.500l-4-2.500v5z" fill="#555"/>
<rect x=".5" y="10" width="28.500" height="6.500" fill="#f5a50f"/><path d="M3.500 10v2M6.500 10v3M9.500 10v2M12.500 10v3M15.500 10v2M18.500 10v3M21.500 10v2M24.500 10v3M27 10v2" stroke="#9a6400" stroke-width=".8"/></svg>
<svg class="ic" style="left:958px;top:28px" width="30" height="30" viewBox="0 0 30 30"><rect x=".5" y=".5" width="28.500" height="28.500" fill="#8ccaf7" stroke="#4a94cf" stroke-width="1"/><circle cx="21" cy="8" r="3" fill="#fdf6b8"/>
<path d="M.5 17.500c3-5 6-6 8.500-4.500s4.500 6.500 7.500 8c1.500-1.500 3.500-3 5.500-2.500s4 3 6.500 5.500v5H.5z" fill="#3f8fcd"/></svg>
<svg class="ic" style="left:1028px;top:28px" width="34" height="31" viewBox="0 0 34 31"><path d="M1 9c0-5 4-8 9-8h14l7 9.500H15c-3 0-4.500 1.500-4.500 4.500v12L1 19.500z" fill="#f2f2f2" stroke="#555" stroke-width="1" stroke-linejoin="round"/><path d="M6 1.700l6 9M1 11.500l9.500 6.500" stroke="#555" stroke-width="1" fill="none"/>
<path d="M5.500 1.500C7 1 8.500 1 10 1h14l7 9.500H15c-1.500 0-2.500.3-3.300 1z" fill="#5fc283"/><path d="M14.500 1l7 9.500" stroke="#3f9c62" stroke-width=".8"/>
<path d="M30 15.500l2.500 2.500-7.500 7-2.500-2.500z" fill="#7a7a7a"/><path d="M22.500 22.500l2.500 2.500c-1.500 4-6 5-10.500 4.500 3-1.500 3.500-5.500 8-7z" fill="#9b5c1f"/></svg>

</div><div class="abs" style="left:4px;top:141.500px;width:300px;height:24.500px;background:#f0f0f0;border:1px solid #c9c9c9"></div>
<svg class="ic" style="left:8.500px;top:150px" width="12" height="8" viewBox="0 0 12 8"><path d="M5.200 0v7.400L0 3.700zM11.200 0v7.400L6 3.700z" fill="#222"/></svg>
<span class="t" style="left:29.30px;top:147.97px;font-size:11.00px;line-height:11.00px;color:#444;transform:scaleX(0.9061);">BROWSER</span>

<svg class="ic" style="left:282.500px;top:148.500px" width="10" height="10" viewBox="0 0 10 10"><circle cx="5" cy="5" r="4.600" fill="#111"/><path d="M2.300 5h5.400" stroke="#f0f0f0" stroke-width="1.400"/></svg>
<div class="abs" style="left:299.500px;top:146.500px;width:1px;height:14px;background:#555"></div><div class="abs" style="left:301.500px;top:148.500px;width:1px;height:10px;background:#999"></div>
<svg class="ic" style="left:20.0px;top:175.8px" width="13" height="12" viewBox="0 0 13 12"><path d="M11.500 .8v10.400H.8z" fill="#8a8a8a" stroke="#2a2a2a" stroke-width="1.200" stroke-linejoin="round"/></svg>
<div class="abs" style="left:40px;top:171.8px;width:147.500px;height:19px;background:rgba(240,240,240,.92)"></div>
<svg class="ic" style="left:43.0px;top:175.2px" width="17" height="12" viewBox="0 0 17 12"><path d="M.5 6C3 2 6 1 8.500 1s5.500 1 8 5c-2.500 4-5.500 5-8 5S3 10 .5 6z" fill="#8c8c8c"/><circle cx="8.500" cy="6" r="3.300" fill="#f0f0f0"/><circle cx="8.500" cy="6" r="1.900" fill="#8c8c8c"/></svg>
<div class="abs" style="left:65px;top:173.1px;width:98px;height:16px;background:#9a9a9a"></div>
<svg class="ic" style="left:68px;top:173.1px" width="16" height="16" viewBox="0 0 16 16"><path d="M1 4.500L4.500 1h10.500v10.500L11.500 15H1z" fill="#e4e4e4" stroke="#444" stroke-width="1" stroke-linejoin="round"/><path d="M1 4.500h10.500V15M11.500 4.500L15 1" fill="none" stroke="#777" stroke-width=".8"/><path d="M1.500 5h9.500v9.500H1.500z" fill="#f4f4f4"/></svg>
<span class="t" style="left:98.30px;top:174.85px;font-size:11.50px;line-height:11.50px;color:#fff;font-weight:bold;transform:scaleX(0.9841);">(Unsaved)</span>

<svg class="ic" style="left:166.500px;top:174.2px" width="14" height="14" viewBox="0 0 14 14"><circle cx="7" cy="7" r="5.900" fill="#fff" stroke="#222" stroke-width="1.100"/><circle cx="7" cy="7" r="2.400" fill="#222"/></svg>
<svg class="ic" style="left:40.0px;top:198.2px" width="11" height="14" viewBox="0 0 11 14"><path d="M1 1.200l8.600 5.800L1 12.800z" fill="#fff" stroke="#2a2a2a" stroke-width="1.300" stroke-linejoin="round"/></svg>
<div class="abs" style="left:58.300px;top:196.1px;width:133.7px;height:18.500px;background:rgba(240,240,240,.92)"></div>
<svg class="ic" style="left:61px;top:197.2px" width="16" height="16" viewBox="0 0 16 16"><g fill="#8c8c8c"><circle cx="8" cy="8" r="5.600"/><g id="gt"><rect x="6.400" y="0" width="3.200" height="16" rx=".8"/></g><rect x="6.400" y="0" width="3.200" height="16" rx=".8" transform="rotate(45 8 8)"/><rect x="6.400" y="0" width="3.200" height="16" rx=".8" transform="rotate(90 8 8)"/><rect x="6.400" y="0" width="3.200" height="16" rx=".8" transform="rotate(135 8 8)"/></g><circle cx="8" cy="8" r="2.500" fill="#f0f0f0"/></svg>
<span class="t" style="left:91.30px;top:199.19px;font-size:12.00px;line-height:12.00px;color:#2b2b2b;transform:scaleX(0.8796);">Document Settings</span>

<svg class="ic" style="left:40.0px;top:222.2px" width="11" height="14" viewBox="0 0 11 14"><path d="M1 1.200l8.600 5.800L1 12.800z" fill="#fff" stroke="#2a2a2a" stroke-width="1.300" stroke-linejoin="round"/></svg>
<div class="abs" style="left:58.300px;top:220.1px;width:109.2px;height:18.500px;background:rgba(240,240,240,.92)"></div>
<svg class="ic" style="left:61.0px;top:221.8px" width="17" height="14" viewBox="0 0 17 14"><path d="M.3 0.500h6.200l1.200 2.200H.3z" fill="#8c8c8c"/><path d="M.3 3.200h16.200v10.300H.3z" fill="#8c8c8c"/><path d="M.3 2.700h16.200" stroke="#b5b5b5" stroke-width=".6"/></svg>
<span class="t" style="left:91.30px;top:223.19px;font-size:12.00px;line-height:12.00px;color:#2b2b2b;transform:scaleX(0.9143);">Named Views</span>

<svg class="ic" style="left:40.0px;top:246.2px" width="11" height="14" viewBox="0 0 11 14"><path d="M1 1.200l8.600 5.800L1 12.800z" fill="#fff" stroke="#2a2a2a" stroke-width="1.300" stroke-linejoin="round"/></svg>
<div class="abs" style="left:58.300px;top:244.1px;width:94.2px;height:18.500px;background:rgba(240,240,240,.92)"></div>
<svg class="ic" style="left:60.8px;top:247.2px" width="17" height="12" viewBox="0 0 17 12"><path d="M.8 6C3 2.500 6 1.500 8.500 1.500s5.500 1 7.700 4.500c-2.200 3.500-5.200 4.500-7.700 4.500S3 9.500 .8 6z" fill="none" stroke="#a0a0a0" stroke-width="1.100"/><circle cx="8.500" cy="6" r="2.500" fill="none" stroke="#a0a0a0" stroke-width="1.100"/><path d="M2.500 .5l12 11" stroke="#a0a0a0" stroke-width="1.300"/></svg>
<svg class="ic" style="left:85.5px;top:245.8px" width="17" height="14" viewBox="0 0 17 14"><path d="M.3 0.500h6.200l1.200 2.200H.3z" fill="#8c8c8c"/><path d="M.3 3.200h16.200v10.300H.3z" fill="#8c8c8c"/><path d="M.3 2.700h16.200" stroke="#b5b5b5" stroke-width=".6"/></svg>
<span class="t" style="left:116.30px;top:247.19px;font-size:12.00px;line-height:12.00px;color:#2b2b2b;transform:scaleX(0.8589);">Origin</span>

<svg class="ic" style="left:38.5px;top:271.8px" width="13" height="12" viewBox="0 0 13 12"><path d="M11.500 .8v10.400H.8z" fill="#8a8a8a" stroke="#2a2a2a" stroke-width="1.200" stroke-linejoin="round"/></svg>
<div class="abs" style="left:58.300px;top:268.1px;width:102.5px;height:18.500px;background:rgba(240,240,240,.92)"></div>
<svg class="ic" style="left:60.8px;top:271.2px" width="17" height="12" viewBox="0 0 17 12"><path d="M.5 6C3 2 6 1 8.500 1s5.500 1 8 5c-2.500 4-5.500 5-8 5S3 10 .5 6z" fill="#8c8c8c"/><circle cx="8.500" cy="6" r="3.300" fill="#f0f0f0"/><circle cx="8.500" cy="6" r="1.900" fill="#8c8c8c"/></svg>
<svg class="ic" style="left:85.5px;top:269.8px" width="17" height="14" viewBox="0 0 17 14"><path d="M.3 0.500h6.200l1.200 2.200H.3z" fill="#8c8c8c"/><path d="M.3 3.200h16.200v10.300H.3z" fill="#8c8c8c"/><path d="M.3 2.700h16.200" stroke="#b5b5b5" stroke-width=".6"/></svg>
<span class="t" style="left:116.30px;top:271.19px;font-size:12.00px;line-height:12.00px;color:#2b2b2b;transform:scaleX(0.8856);">Bodies</span>

<svg class="ic" style="left:40.0px;top:318.2px" width="11" height="14" viewBox="0 0 11 14"><path d="M1 1.200l8.600 5.800L1 12.800z" fill="#fff" stroke="#2a2a2a" stroke-width="1.300" stroke-linejoin="round"/></svg>
<div class="abs" style="left:58.300px;top:316.1px;width:114.2px;height:18.500px;background:rgba(240,240,240,.92)"></div>
<svg class="ic" style="left:60.8px;top:319.2px" width="17" height="12" viewBox="0 0 17 12"><path d="M.5 6C3 2 6 1 8.500 1s5.500 1 8 5c-2.500 4-5.500 5-8 5S3 10 .5 6z" fill="#8c8c8c"/><circle cx="8.500" cy="6" r="3.300" fill="#f0f0f0"/><circle cx="8.500" cy="6" r="1.900" fill="#8c8c8c"/></svg>
<svg class="ic" style="left:85.5px;top:317.8px" width="17" height="14" viewBox="0 0 17 14"><path d="M.3 0.500h6.200l1.200 2.200H.3z" fill="#8c8c8c"/><path d="M.3 3.200h16.200v10.300H.3z" fill="#8c8c8c"/><path d="M.3 2.700h16.200" stroke="#b5b5b5" stroke-width=".6"/></svg>
<span class="t" style="left:116.30px;top:319.19px;font-size:12.00px;line-height:12.00px;color:#2b2b2b;transform:scaleX(0.9014);">Sketches</span>

<svg class="ic" style="left:82px;top:281.500px" width="78" height="5" viewBox="0 0 78 5"><path d="M1 4l2.500-3M7 4l2.500-3M13 4l2.500-3M19 4l2.500-3M25 4l2.500-3M31 4l2.500-3M37 4l2.500-3M43 4l2.500-3M49 4l2.500-3M55 4l2.500-3M61 4l2.500-3M67 4l2.500-3M73 4l2.500-3" stroke="#5b7fae" stroke-width="1.300"/></svg>
<div class="abs" style="left:76.300px;top:291.8px;width:94.500px;height:19px;background:rgba(240,240,240,.92)"></div>
<svg class="ic" style="left:79.3px;top:295.2px" width="17" height="12" viewBox="0 0 17 12"><path d="M.5 6C3 2 6 1 8.500 1s5.500 1 8 5c-2.500 4-5.500 5-8 5S3 10 .5 6z" fill="#8c8c8c"/><circle cx="8.500" cy="6" r="3.300" fill="#f0f0f0"/><circle cx="8.500" cy="6" r="1.900" fill="#8c8c8c"/></svg>
<div class="abs" style="left:101px;top:291.4px;width:69.800px;height:19.500px;background:#0696d7"></div>
<svg class="ic" style="left:104px;top:292.8px" width="16" height="17" viewBox="0 0 16 17"><defs><linearGradient id="bcy" x1="0" x2="1"><stop offset="0" stop-color="#fff"/><stop offset=".6" stop-color="#e8e8e8"/><stop offset="1" stop-color="#9a9a9a"/></linearGradient></defs><path d="M1 3.500v10c0 1.500 3 2.700 7 2.700s7-1.200 7-2.700v-10z" fill="url(#bcy)" stroke="#333" stroke-width="1"/><ellipse cx="8" cy="3.500" rx="7" ry="2.700" fill="#fff" stroke="#333" stroke-width="1"/></svg>
<span class="t" style="left:134.30px;top:295.09px;font-size:12.00px;line-height:12.00px;color:#fff;font-weight:bold;transform:scaleX(0.9142);">Barb</span>

<div class="abs" style="left:4.500px;top:953.500px;width:299.500px;height:24.500px;background:#f0f0f0;border:1px solid #c9c9c9"></div>
<span class="t" style="left:29.30px;top:959.87px;font-size:11.00px;line-height:11.00px;color:#444;transform:scaleX(0.8883);">COMMENTS</span>

<svg class="ic" style="left:282px;top:960px" width="10" height="10" viewBox="0 0 10 10"><circle cx="5" cy="5" r="4.600" fill="#111"/><path d="M2.300 5h5.400M5 2.300v5.400" stroke="#f0f0f0" stroke-width="1.300"/></svg>
<div class="abs" style="left:299.500px;top:958.500px;width:1px;height:14px;background:#555"></div><div class="abs" style="left:301.500px;top:960.500px;width:1px;height:10px;background:#999"></div><div class="abs" style="left:1516.0px;top:261.0px;width:399.5px;height:372.5px;background:#f0f0f0;border:1px solid #c6c6c6"></div>
<div class="abs" style="left:1517.0px;top:285.0px;width:397.5px;height:1px;background:#cfcfcf"></div>
<div class="abs" style="left:1519px;top:268.500px;width:1px;height:9px;background:#666"></div><div class="abs" style="left:1521px;top:270px;width:1px;height:6px;background:#aaa"></div>
<svg class="ic" style="left:1527.800px;top:268.500px" width="10" height="10" viewBox="0 0 10 10"><circle cx="5" cy="5" r="4.500" fill="#111"/><path d="M2.300 5h5.400" stroke="#f0f0f0" stroke-width="1.400"/></svg>
<span class="t" style="left:1541.60px;top:268.17px;font-size:11.00px;line-height:11.00px;color:#444;transform:scaleX(0.8735);">FILLET</span>

<svg class="ic" style="left:1901px;top:270px" width="10" height="7" viewBox="0 0 10 7"><path d="M0 0v6.400L4.500 3.200zM5 0v6.400L9.500 3.200z" fill="#111"/></svg>
<span class="t" style="left:1529.00px;top:295.14px;font-size:12.00px;line-height:12.00px;color:#222;transform:scaleX(0.9030);">Type</span>

<div class="abs" style="left:1651.500px;top:288.0px;width:232px;height:25.7px;background:#fff;border:1px solid #d2d2d2"></div>
<svg class="ic" style="left:1654.5px;top:292.4px" width="17" height="17" viewBox="0 0 17 17"><path d="M1.200 4.500L4 1.500h4c5 0 8 3 8 8v6.500H1.200z" fill="#dcdcdc" stroke="#555" stroke-width=".9" stroke-linejoin="round"/><path d="M5 4.500L7.500 1.500c5.500 0 8.500 3 8.500 8l-2.500 2.500C13.500 7.500 10.500 4.500 5 4.500z" fill="#5aa5e0"/><path d="M1.200 4.500H5c5.500 0 8.500 3 8.500 7.500V16" fill="none" stroke="#555" stroke-width=".8"/></svg>
<span class="t" style="left:1675.30px;top:294.99px;font-size:12.00px;line-height:12.00px;color:#222;transform:scaleX(0.8285);">Fillet</span>

<svg class="ic" style="left:1871.500px;top:299.2px" width="7" height="5" viewBox="0 0 7 5"><path d="M0 0h6.400L3.200 4z" fill="#222"/></svg>
<div class="abs" style="left:1525px;top:321.500px;width:359.500px;height:111.500px;background:#fff;border:1px solid #d2d2d2"></div>
<div class="abs" style="left:1527px;top:322.500px;width:355.800px;height:25.700px;background:#a8cef6"></div>
<span class="t" style="left:1531.50px;top:329.14px;font-size:12.00px;line-height:12.00px;color:#222;transform:scaleX(0.8741);">5 Edges</span>

<svg class="ic" style="left:1665.0px;top:326.7px" width="17" height="17" viewBox="0 0 17 17"><path d="M1.200 4.500L4 1.500h4c5 0 8 3 8 8v6.500H1.200z" fill="#dcdcdc" stroke="#555" stroke-width=".9" stroke-linejoin="round"/><path d="M5 4.500L7.500 1.500c5.500 0 8.500 3 8.500 8l-2.500 2.500C13.500 7.500 10.500 4.500 5 4.500z" fill="#5aa5e0"/><path d="M1.200 4.500H5c5.500 0 8.500 3 8.500 7.500V16" fill="none" stroke="#555" stroke-width=".8"/></svg>
<div class="abs" style="left:1682px;top:324px;width:62.500px;height:22.500px;background:#fff;border:1px solid #dcdcdc"></div>
<span class="t" style="left:1685.30px;top:329.14px;font-size:12.00px;line-height:12.00px;color:#222;transform:scaleX(0.8567);">0.00 mm</span>

<svg class="ic" style="left:1771.500px;top:327px" width="18" height="16" viewBox="0 0 18 16"><path d="M1.500 1.500l3 3.500v9.500l-3-3z" fill="#f4f4f4" stroke="#333" stroke-width="1" stroke-linejoin="round"/><path d="M1.500 1.500h7.500c4 0 7 2.500 7.500 6l-5 3.500c0-3.500-3-6-7-6z" fill="#5aa5e0" stroke="#333" stroke-width=".9" stroke-linejoin="round"/><path d="M4.500 5v9.500l4-3V9" fill="none" stroke="#333" stroke-width=".9"/></svg>
<span class="t" style="left:1793.40px;top:328.94px;font-size:12.00px;line-height:12.00px;color:#222;transform:scaleX(0.8850);">Tangent (G1)</span>

<svg class="ic" style="left:1535.500px;top:412.500px" width="11" height="11" viewBox="0 0 11 11"><path d="M5.500 .5v10M.5 5.500h10" stroke="#222" stroke-width="1.500"/></svg>
<svg class="ic" style="left:1562.500px;top:413.500px" width="9" height="9" viewBox="0 0 9 9"><path d="M1 1l7 7M8 1L1 8" stroke="#222" stroke-width="1.700"/></svg>
<span class="t" style="left:1529.00px;top:445.14px;font-size:12.00px;line-height:12.00px;color:#222;transform:scaleX(0.8871);">Radius Type</span>

<div class="abs" style="left:1651.500px;top:438.0px;width:232px;height:25.7px;background:#fff;border:1px solid #d2d2d2"></div>
<svg class="ic" style="left:1654.5px;top:442.4px" width="17" height="17" viewBox="0 0 17 17"><path d="M1.200 4.500L4 1.500h4c5 0 8 3 8 8v6.500H1.200z" fill="#dcdcdc" stroke="#555" stroke-width=".9" stroke-linejoin="round"/><path d="M5 4.500L7.500 1.500c5.500 0 8.500 3 8.500 8l-2.500 2.500C13.500 7.500 10.500 4.500 5 4.500z" fill="#5aa5e0"/><path d="M1.200 4.500H5c5.500 0 8.500 3 8.500 7.500V16" fill="none" stroke="#555" stroke-width=".8"/></svg>
<span class="t" style="left:1675.30px;top:444.99px;font-size:12.00px;line-height:12.00px;color:#222;transform:scaleX(0.9263);">Constant</span>

<svg class="ic" style="left:1871.500px;top:449.2px" width="7" height="5" viewBox="0 0 7 5"><path d="M0 0h6.400L3.200 4z" fill="#222"/></svg>
<span class="t" style="left:1529.00px;top:475.14px;font-size:12.00px;line-height:12.00px;color:#222;transform:scaleX(0.8985);">Edges/Faces/Features</span>

<div class="abs" style="left:1651px;top:467.400px;width:58.500px;height:27px;background:#0696d7;border-radius:1px"></div>
<svg class="ic" style="left:1658.500px;top:473.500px" width="11" height="16" viewBox="0 0 11 16"><path d="M1 1v11.500l2.800-2.600 2 4.600 2-.9-2-4.500h3.700z" fill="#fff" stroke="#222" stroke-width="1" stroke-linejoin="round"/></svg>
<span class="t" style="left:1673.40px;top:475.24px;font-size:12.00px;line-height:12.00px;color:#fff;transform:scaleX(0.8843);">Select</span>

<span class="t" style="left:1529.00px;top:505.14px;font-size:12.00px;line-height:12.00px;color:#222;transform:scaleX(0.8783);">Tangent Chain</span>

<div class="abs" style="left:1656.500px;top:504.800px;width:13px;height:12.500px;background:#dedede;border:1px solid #333;border-radius:2.500px"></div>
<svg class="ic" style="left:1658px;top:505.500px" width="11" height="11" viewBox="0 0 11 11"><path d="M1.800 5.800l2.500 2.700L9.300 1.800" fill="none" stroke="#111" stroke-width="1.500"/></svg>
<span class="t" style="left:1529.00px;top:535.14px;font-size:12.00px;line-height:12.00px;color:#222;transform:scaleX(0.8981);">Tangency Weight</span>

<div class="abs" style="left:1651.500px;top:528.500px;width:232px;height:25.500px;background:#fff;border:1px solid #d2d2d2"></div>
<span class="t" style="left:1655.70px;top:535.24px;font-size:12.00px;line-height:12.00px;color:#222;transform:scaleX(0.8560);">1.00</span>

<div class="abs" style="left:1518.500px;top:561.500px;width:383.500px;height:1px;background:#c9c9c9"></div>
<span class="t" style="left:1529.00px;top:574.74px;font-size:12.00px;line-height:12.00px;color:#222;transform:scaleX(0.8886);">Corner Type</span>

<div class="abs" style="left:1651.500px;top:567.8px;width:232px;height:25.9px;background:#fff;border:1px solid #d2d2d2"></div>
<svg class="ic" style="left:1654.5px;top:572.2px" width="17" height="17" viewBox="0 0 17 17"><path d="M1 6.500h9.500v9.500H1z" fill="#f4f4f4" stroke="#555" stroke-width=".9"/><path d="M1 6.500L4 2.500c3-2.500 9-2.500 11.500 0v3l-2 1.500v8l-3 1V6.500z" fill="#5aa5e0"/><path d="M1 6.500L4 2.500c2.500-2 7-2.300 10-.8" fill="none" stroke="#2d7fc8" stroke-width=".9"/><path d="M15.500 6.500v6" stroke="#555" stroke-width=".9"/></svg>
<span class="t" style="left:1675.30px;top:574.89px;font-size:12.00px;line-height:12.00px;color:#222;transform:scaleX(0.8576);">Rolling Ball</span>

<svg class="ic" style="left:1871.500px;top:579.0px" width="7" height="5" viewBox="0 0 7 5"><path d="M0 0h6.400L3.200 4z" fill="#222"/></svg>
<div class="abs" style="left:1517.500px;top:597px;width:397px;height:1px;background:#c9c9c9"></div>
<svg class="ic" style="left:1524.800px;top:610px" width="12" height="12" viewBox="0 0 12 12"><circle cx="6" cy="6" r="5.600" fill="#111"/><circle cx="6" cy="3.200" r="1.100" fill="#fff"/><path d="M4.600 5.200h2.300v3.500M4.500 9.200h3.200" stroke="#fff" stroke-width="1.300" fill="none"/></svg>
<div class="abs" style="left:1774px;top:606.300px;width:60px;height:18.700px;background:#ececec;border:1px solid #c8c8c8"></div>
<span class="t" style="left:1795.30px;top:609.67px;font-size:12.50px;line-height:12.50px;color:#b0b0b0;transform:scaleX(0.9137);">OK</span>

<div class="abs" style="left:1843.700px;top:606.300px;width:60px;height:18.700px;background:#f0f0f0;border:1px solid #bcbcbc"></div>
<span class="t" style="left:1854.00px;top:609.58px;font-size:12.50px;line-height:12.50px;color:#333;transform:scaleX(0.9894);">Cancel</span>
<div class="abs" style="left:753.500px;top:141px;width:414px;height:23.500px;background:rgba(242,242,242,.95)"></div>
<svg class="ic" style="left:758px;top:146px" width="13" height="15" viewBox="0 0 13 15"><path d="M3.300 6V4.300a3.100 3.100 0 0 1 6.200 0V6" fill="none" stroke="#e0262b" stroke-width="1.700"/><rect x=".8" y="5.600" width="11.300" height="8.600" rx="1" fill="#e0262b"/></svg>
<span class="t" style="left:778.40px;top:147.91px;font-size:11.50px;line-height:11.50px;color:#222;font-weight:bold;transform:scaleX(0.9392);">Read-Only:</span>

<span class="t" style="left:858.40px;top:147.91px;font-size:11.50px;line-height:11.50px;color:#222;transform:scaleX(0.9253);">Document limit has been reached</span>

<div class="abs" style="left:1032.500px;top:142px;width:1px;height:22px;background:#dadada"></div>
<span class="t" style="left:1046.00px;top:147.91px;font-size:11.50px;line-height:11.50px;color:#0b78c2;transform:scaleX(0.9116);">My Editable Documents</span>

<div class="abs" style="left:1177.500px;top:467px;width:106.200px;height:21.800px;background:rgba(240,240,240,.96)"></div>
<div class="abs" style="left:1181px;top:468.500px;width:5px;height:19px;background:repeating-linear-gradient(135deg,#e2e2e2 0 1px,#f4f4f4 1px 3px)"></div>
<div class="abs" style="left:1187.500px;top:467.500px;width:1.500px;height:21px;background:#dcdcdc"></div>
<div class="abs" style="left:1191px;top:468.400px;width:68.800px;height:19.400px;background:#fff;border:1px solid #b9b9b9"></div>
<div class="abs" style="left:1204.900px;top:471.100px;width:40px;height:13.800px;background:#0a74d6"></div>
<span class="t" style="left:1205.90px;top:472.70px;font-size:10.80px;line-height:10.80px;color:#fff;transform:scaleX(0.9191);">0.00 mm</span>

<div class="abs" style="left:1270.900px;top:471.0px;width:2.800px;height:2.800px;border-radius:50%;background:#777"></div>
<div class="abs" style="left:1270.900px;top:476.0px;width:2.800px;height:2.800px;border-radius:50%;background:#777"></div>
<div class="abs" style="left:1270.900px;top:480.9px;width:2.800px;height:2.800px;border-radius:50%;background:#777"></div>
<div class="abs" style="left:1283.800px;top:590px;width:96.500px;height:13.800px;background:#f6f6f6;border:1px solid #b0b0b0;border-top-color:#e4e4e4;border-left-color:#dcdcdc"></div>
<span class="t" style="left:1286.60px;top:590.74px;font-size:12.00px;line-height:12.00px;color:#000;transform:scaleX(0.8993);">Specify fillet radius</span>

<span class="t" style="left:1857.50px;top:959.74px;font-size:12.00px;line-height:12.00px;color:#222;transform:scaleX(0.9423);">5 Edges</span>

<div class="abs" style="left:841px;top:953.800px;width:237px;height:23.700px;background:#f4f4f4"></div>
<svg class="ic" style="left:841px;top:953.800px" width="237" height="24" viewBox="841 953.800 237 24">
<g fill="#333"><path d="M865.200 964h5.600l-2.800 3.600zM976.200 964h5.600l-2.800 3.600zM1006.600 964h5.200l-2.600 3.600zM1037.200 964h5.400l-2.700 3.600zM1067.800 964h5.800l-2.900 3.600z"/></g>
<g fill="none" stroke="#333" stroke-width="1.100"><path d="M850.500 973.500v-13M853 973.500v-13M850.500 973.500h2.500"/><path d="M848.800 961.800l3-3.600 3 3.600z" fill="#f4f4f4"/><path d="M855.500 964.500c3 .6 4.300 1.600 4.300 2.800 0 2-4 3.200-8 3.200-2.300 0-4.300-.3-5.700-.9M847.500 964.800c-2.300.6-3.500 1.500-3.500 2.500"/><path d="M847.800 967.800l-3 2 3.200 2.200" stroke-width="1.300"/></g>
<g fill="none" stroke="#333" stroke-width="1.200"><rect x="877.300" y="963.300" width="15.200" height="10.400"/><rect x="880.300" y="966.300" width="9.200" height="4.300" fill="#9fb0c8"/><path d="M879 963l3.500-4.200 1.200 2.400 4.800-2.600v4.400"/></g>
<g fill="#fbfbfb" stroke="#333" stroke-width="1"><path d="M908.500 974c-2-2.500-4.500-5.500-5-7.500.8-.9 2-.3 3 1.300v-6.300c0-1.300 1.800-1.300 1.800 0v-2c0-1.300 1.900-1.300 1.900 0v-.8c0-1.300 1.900-1.300 1.900 0v1.600c0-1.300 1.800-1.300 1.800 0v2.300c0-1.100 1.700-1.100 1.700 0v5.500c0 2.500-1 4-1.600 5.900z"/></g>
<g fill="none" stroke="#333"><circle cx="934.500" cy="964.300" r="4.800" fill="#d6e6ec" stroke-width="1.300"/><path d="M938 968l4.300 4.600" stroke-width="2.400"/><path d="M941 960.500h4M943 958.500v4M941 964.800h4" stroke-width="1"/></g>
<g fill="none" stroke="#333"><rect x="955" y="958.300" width="15" height="14.600" stroke-dasharray="2.500 1.800" stroke-width="1"/><circle cx="961.800" cy="964.300" r="5.600" fill="#d6e6ec" stroke-width="1.300"/><path d="M966 968.500l4.800 4.600" stroke-width="2.500"/></g>
<g stroke="#333" stroke-width="1.200"><rect x="988.800" y="958.500" width="14.600" height="11" rx="1" fill="#f4f4f4"/><rect x="990.600" y="960.200" width="11" height="7.600" fill="#8fa8d8" stroke="#4a64a0" stroke-width=".8"/><path d="M994 971.300h4.300v1.600H994zM992.300 973.700h7.700" fill="none" stroke="#777" stroke-width="1"/></g>
<g><rect x="1019" y="958" width="15.500" height="16" fill="#e8e8ee"/><rect x="1019" y="966" width="15.500" height="8" fill="#9fa6bc" opacity=".7"/><path d="M1019 958v16M1022.900 958v16M1026.800 958v16M1030.700 958v16M1034.500 958v16M1019 958h15.500M1019 962h15.500M1019 966h15.500M1019 970h15.500M1019 974h15.500" stroke="#444" stroke-width=".9" fill="none"/></g>
<g fill="#b9c8ea" stroke="#2e4a8a" stroke-width="1"><rect x="1050" y="958.500" width="6.800" height="6.800"/><rect x="1058" y="958.500" width="6.800" height="6.800"/><rect x="1050" y="966.600" width="6.800" height="6.800"/><rect x="1058" y="966.600" width="6.800" height="6.800"/></g>
</svg><div id="timeline">
<svg class="ic" style="left:0;top:0" width="640" height="49" viewBox="0 983 640 49">
<g fill="#454545"><rect x="10.800" y="1001" width="1.800" height="14"/><path d="M23 1001v14l-10-7z"/>
<path d="M44.500 1001.300v13.400L35.300 1008z"/><rect x="45.800" y="1005" width="2.300" height="6"/>
<path d="M61.200 1000v15.500l11.600-7.750z"/>
<rect x="85" y="1005" width="2.300" height="6"/><path d="M88.600 1001.300v13.400l9.200-6.700z"/>
<path d="M110.800 1001v14l10-7z"/><rect x="121.200" y="1001" width="1.800" height="14"/></g>
<path d="M154.700 1018v5.500H586.700v-5.500M178.7 1018v5.500M202.7 1018v5.500M226.7 1018v5.500M250.7 1018v5.500M274.7 1018v5.500M298.7 1018v5.500M322.7 1018v5.500M346.7 1018v5.500M370.7 1018v5.500M394.7 1018v5.500M418.7 1018v5.500M442.7 1018v5.500M466.7 1018v5.500M490.7 1018v5.500M514.7 1018v5.500M538.7 1018v5.500M562.7 1018v5.500" fill="none" stroke="#c6c6c6" stroke-width="1.800"/>
<path d="M171 994.500l3.300-3.800M176.300 994.500l3.300-3.800M181.600 994.500l3.300-3.800" stroke="#333" stroke-width="1.500"/>
<path d="M598 995v29.500" stroke="#444" stroke-width="1.600"/><path d="M592 993h12.200v2.500l-4.700 5h-2.800l-4.700-5z" fill="#555"/>

<path d="M145.7 1002v9.500c0 1.800 3.600 3.200 8 3.200s8-1.400 8-3.200V1002z" fill="#6cb2e6"/><ellipse cx="153.7" cy="1002" rx="8" ry="3.100" fill="#8ccaf7"/>
<path d="M169.7 1002v9.500c0 1.800 3.600 3.200 8 3.200s8-1.400 8-3.200V1002z" fill="#6cb2e6"/><ellipse cx="177.7" cy="1002" rx="8" ry="3.100" fill="#8ccaf7"/>
<path d="M193.7 1012h11l3-2.500v3.500l-3 2.500h-11z" fill="#bdbdbd"/><path d="M193.7 1001l2.500-2.500h9.500l-3 2.500z" fill="#8ccaf7"/><path d="M193.7 1001h9.500v11h-9.500z" fill="#6cb2e6"/><path d="M203.2 1001l3-2.500v11l-3 2.500z" fill="#4a94cf"/><path d="M208.5 1012v-11" stroke="#222" stroke-width="1.100"/><path d="M206.7 1002.500l1.800-3.500 1.800 3.500z" fill="#222"/>
<path d="M217.7 1012h11l3-2.500v3.500l-3 2.500h-11z" fill="#bdbdbd"/><path d="M217.7 1001l2.500-2.500h9.500l-3 2.500z" fill="#8ccaf7"/><path d="M217.7 1001h9.500v11h-9.500z" fill="#6cb2e6"/><path d="M227.2 1001l3-2.500v11l-3 2.500z" fill="#4a94cf"/><path d="M232.5 1012v-11" stroke="#222" stroke-width="1.100"/><path d="M230.7 1002.500l1.800-3.500 1.800 3.500z" fill="#222"/>
<path d="M241.7 1005l6-6h4.500c3.500 0 5.500 2 5.500 5.500v10h-16z" fill="#dedede" stroke="#555" stroke-width="1" stroke-linejoin="round"/><path d="M243.2 1004.500l4.500-4.500 4 2.800-4.500 4.500z" fill="#4a94cf"/>
<path d="M265.7 1005l6-6h4.500c3.500 0 5.500 2 5.500 5.500v10h-16z" fill="#dedede" stroke="#555" stroke-width="1" stroke-linejoin="round"/><path d="M267.2 1004.500l4.500-4.500 4 2.800-4.500 4.500z" fill="#4a94cf"/>
<path d="M289.7 1005l6-6h4.500c3.500 0 5.500 2 5.500 5.500v10h-16z" fill="#dedede" stroke="#555" stroke-width="1" stroke-linejoin="round"/><path d="M291.2 1004.500l4.500-4.500 4 2.800-4.500 4.500z" fill="#4a94cf"/>
<path d="M313.7 1006l2-2h3.500v-3l2-2h8.500v8.500l-2 2.500h-4v3l-2 2h-8z" fill="#6cb2e6"/><path d="M313.7 1006l2-2h3.500v-3l2-2h8.500l-2 2h-8.500v5z" fill="#8ccaf7"/>
<path d="M337.7 1002v9.500c0 1.800 3.600 3.200 8 3.200s8-1.400 8-3.200V1002z" fill="#6cb2e6"/><ellipse cx="345.7" cy="1002" rx="8" ry="3.100" fill="#8ccaf7"/>
<rect x="364.2" y="999" width="11" height="15.500" fill="#e4e4e4" stroke="#777" stroke-width="1"/><path d="M361.7 1004.500l15-3M361.7 1008l15-3M361.7 1011.500l15-3" stroke="#2f8fe0" stroke-width="1.500"/>
<path d="M389.7 1002l3.500-3.500h8.500v11l-3 3z" fill="#4a94cf"/><rect x="386.2" y="1002" width="12.500" height="12.500" fill="#f2f2f2" stroke="#444" stroke-width="1.100"/><rect x="389.2" y="1005" width="6.500" height="6.500" fill="#fff" stroke="#444" stroke-width="1"/>
<path d="M413.7 1002l3.500-3.500h8.500v11l-3 3z" fill="#4a94cf"/><rect x="410.2" y="1002" width="12.500" height="12.500" fill="#f2f2f2" stroke="#444" stroke-width="1.100"/><rect x="413.2" y="1005" width="6.500" height="6.500" fill="#fff" stroke="#444" stroke-width="1"/>
<path d="M433.7 1003l3.500-4h4c5 0 8 3 8 7.500v8h-15.500z" fill="#dedede" stroke="#555" stroke-width="1" stroke-linejoin="round"/><path d="M441.2 999c4.500 0 7.500 2.500 8 7l-2.500 2.500c-.5-4-3-6.500-7.500-7z" fill="#4a94cf"/>
<rect x="458.7" y="1000" width="13" height="13" fill="none" stroke="#444" stroke-width="1" stroke-dasharray="3.500 2"/><g fill="#1a7fe0"><rect x="457.7" y="999" width="2.200" height="2.200"/><rect x="470.7" y="999" width="2.200" height="2.200"/><rect x="457.7" y="1012" width="2.200" height="2.200"/></g><path d="M465.2 1014.500l1-3.500 5-5 2.500 2.500-5 5z" fill="#f2b635"/><path d="M471.2 1006l1.500-1.500 2.500 2.500-1.500 1.500z" fill="#e8393f"/>
<path d="M481.7 1012h11l3-2.500v3.500l-3 2.500h-11z" fill="#bdbdbd"/><path d="M481.7 1001l2.500-2.500h9.500l-3 2.500z" fill="#8ccaf7"/><path d="M481.7 1001h9.500v11h-9.500z" fill="#6cb2e6"/><path d="M491.2 1001l3-2.500v11l-3 2.500z" fill="#4a94cf"/><path d="M496.5 1012v-11" stroke="#222" stroke-width="1.100"/><path d="M494.7 1002.500l1.800-3.500 1.800 3.500z" fill="#222"/>
<path d="M513.7 1001.500v12M507.7 1007.500h12" stroke="#2a2a2a" stroke-width="1.500"/><path d="M513.7 999.500l2.700 3.600h-5.400zM513.7 1015.500l2.700-3.600h-5.400zM505.7 1007.500l3.600-2.700v5.400zM521.7 1007.500l-3.600-2.700v5.400z" fill="#2a2a2a"/>
<path d="M537.7 1001.500v12M531.7 1007.500h12" stroke="#2a2a2a" stroke-width="1.500"/><path d="M537.7 999.500l2.700 3.600h-5.400zM537.7 1015.500l2.700-3.600h-5.400zM529.7 1007.500l3.600-2.700v5.400zM545.7 1007.500l-3.600-2.700v5.400z" fill="#2a2a2a"/>
<path d="M553.7 1006l2-2h3.500v-3l2-2h8.500v8.500l-2 2.500h-4v3l-2 2h-8z" fill="#6cb2e6"/><path d="M553.7 1006l2-2h3.500v-3l2-2h8.500l-2 2h-8.500v5z" fill="#8ccaf7"/>
<path d="M577.7 1001.500l2.500-2.500h13v13l-2.500 2.500h-13z" fill="#dcdcdc" stroke="#555" stroke-width="1" stroke-linejoin="round"/><path d="M577.7 1001.500h13v13M590.7 1001.500l2.500-2.500" fill="none" stroke="#555" stroke-width=".8"/><circle cx="584.2" cy="1008" r="4.500" fill="#f4f4f4" stroke="#555" stroke-width=".9"/><path d="M581.2 1005.500a3.500 3.500 0 1 0 6 4.500a4.500 4.500 0 0 1-6-4.500z" fill="#4a94cf"/>
</svg>
<svg class="ic" style="left:1889px;top:14.500px" width="20" height="20" viewBox="0 0 20 20"><g fill="#8a8a8a"><circle cx="10" cy="10" r="6.300"/><rect x="8.200" y="1" width="3.600" height="18" rx=".9"/><rect x="8.200" y="1" width="3.600" height="18" rx=".9" transform="rotate(45 10 10)"/><rect x="8.200" y="1" width="3.600" height="18" rx=".9" transform="rotate(90 10 10)"/><rect x="8.200" y="1" width="3.600" height="18" rx=".9" transform="rotate(135 10 10)"/></g><circle cx="10" cy="10" r="2.700" fill="#f2f2f2"/></svg>
</div><div id="taskbar">
<svg class="ic" style="left:0;top:0" width="1920" height="48" viewBox="0 1032 1920 48">
<defs><linearGradient id="wg" x1="0" y1="0" x2="1" y2="1"><stop offset="0" stop-color="#6fdcfb"/><stop offset="1" stop-color="#0d8ae4"/></linearGradient>
<linearGradient id="chatg" x1="0" y1="0" x2="1" y2="1"><stop offset="0" stop-color="#8f8ae6"/><stop offset="1" stop-color="#5b52c4"/></linearGradient>
<linearGradient id="edg" x1="0" y1="0" x2="1" y2="1"><stop offset="0" stop-color="#2db0e8"/><stop offset=".6" stop-color="#1565c0"/><stop offset="1" stop-color="#0c4a9a"/></linearGradient>
<linearGradient id="edg2" x1="0" y1="1" x2="1" y2="0"><stop offset="0" stop-color="#2bc3d2"/><stop offset="1" stop-color="#6ad345"/></linearGradient>
<linearGradient id="wdg" x1="0" y1="0" x2="0" y2="1"><stop offset="0" stop-color="#f4f4f4"/><stop offset="1" stop-color="#9c9c9c"/></linearGradient>
</defs>
<!-- start -->
<g fill="url(#wg)"><rect x="597" y="1045" width="11" height="11" rx=".6"/><rect x="609.200" y="1045" width="11" height="11" rx=".6"/><rect x="597" y="1057.200" width="11" height="11" rx=".6"/><rect x="609.200" y="1057.200" width="11" height="11" rx=".6"/></g>
<!-- search -->
<circle cx="654.500" cy="1054.600" r="8.400" fill="#3c3c3c" stroke="#ececec" stroke-width="2.600"/><path d="M648.800 1061.300l-5 5.300" stroke="#ececec" stroke-width="3" stroke-linecap="round"/>
<!-- task view -->
<rect x="692" y="1045" width="16.800" height="15.800" rx="1.200" fill="url(#wdg)"/><rect x="692" y="1045" width="16.800" height="15.800" rx="1.200" fill="#f2f2f2" opacity=".75"/><rect x="685" y="1051.400" width="17.800" height="14.800" rx="1.200" fill="#7d7d7d" opacity=".93"/>
<!-- widgets -->
<rect x="729" y="1045" width="24" height="22" rx="1.500" fill="#1565c8"/><rect x="731" y="1047" width="9.200" height="18" rx=".8" fill="#f4f6fa"/><rect x="742" y="1047" width="9" height="8" fill="#6fd0fb"/><rect x="742" y="1056" width="9" height="4" fill="#3aa6f0"/><rect x="742" y="1061" width="9" height="4" fill="#1d86e0"/>
<!-- chat -->
<path d="M785 1044.200a11.500 11.500 0 1 1-6.500 21l-5 1.800 1.300-5a11.500 11.500 0 0 1 10.200-17.800z" fill="url(#chatg)"/><rect x="778" y="1051.200" width="9.800" height="8.600" rx="1.500" fill="#fff"/><path d="M788.600 1055.500l4-3v6z" fill="#fff"/>
<!-- explorer -->
<path d="M816.600 1047.500c0-1 .6-1.500 1.500-1.500h6.500l2.200 2.300h13c1 0 1.500.6 1.500 1.500v15.500c0 1-.5 1.500-1.500 1.500h-21.700c-.9 0-1.500-.5-1.500-1.500z" fill="#f6b92b"/><path d="M816.600 1051.500h24.700v13.800c0 1-.5 1.500-1.500 1.500h-21.700c-.9 0-1.500-.5-1.500-1.500z" fill="#fbd64f"/><path d="M821.800 1062c0-1.300.7-2 2-2h10.400c1.300 0 2 .7 2 2v4.800h-14.400z" fill="#2d8ae6"/><rect x="825" y="1062.300" width="8" height="1.700" rx=".8" fill="#1763b8"/>
<rect x="826" y="1072.400" width="6" height="2.600" rx="1.300" fill="#8c8c8c"/>
<!-- whatsapp -->
<path d="M872 1045.500a10.800 10.800 0 1 1-5.400 20.200l-6 1.700 1.700-5.800a10.800 10.800 0 0 1 9.700-16.100z" fill="#fff"/><path d="M872 1047.300a9 9 0 1 1-4.800 16.600l-3.800 1.100 1.100-3.700a9 9 0 0 1 7.500-14z" fill="#3bd267"/><path d="M868.300 1052c.8-1 1.700-.7 2 0l.8 1.800c.2.500-.6 1.200-.9 1.600.6 1.500 2 2.900 3.600 3.600.5-.5 1-1.300 1.600-1.100l1.900.9c.6.300.8 1.200-.1 2-1.300 1.200-3.300.9-5.500-.5-2.400-1.600-4.700-5.200-3.400-8.300z" fill="#fff"/>
<circle cx="881.900" cy="1046.800" r="8" fill="#e8112d"/><path d="M879.500 1044.300l2.700-1.900v9" stroke="#fff" stroke-width="1.700" fill="none"/>
<rect x="870" y="1072.400" width="6" height="2.600" rx="1.300" fill="#8c8c8c"/>
<!-- edge -->
<circle cx="917" cy="1055.700" r="11.800" fill="url(#edg)"/><path d="M906 1052c2-6 8-9 13.500-8 5.500 1 9.500 5.500 9.300 11-.2 3-2.500 5-5.500 5-2.500 0-4.300-1-4.300-2.700 0-1 1-1.500 1-3 0-2-2-3.800-5-3.800-3.500 0-6.500 1.500-9 5z" fill="url(#edg2)"/><path d="M912.500 1056c-1 3 0 6.500 3.500 8.500 3 1.500 7 1 9.500-1-2 .5-5 .5-7-.8-2.500-1.500-3.500-4-3-7z" fill="#0c3f8a" opacity=".85"/>
<!-- terminal -->
<rect x="949.500" y="1046.500" width="22" height="18.300" fill="#0c0c0c" stroke="#8d8d8d" stroke-width="1"/><rect x="950" y="1047" width="21" height="2.300" fill="#a8a8a8"/><path d="M952.500 1052.300h2.500M956 1052.300h2M959.500 1054.500h6" stroke="#e0e0e0" stroke-width="1.200"/><path d="M952.500 1051v3.500" stroke="#e0e0e0" stroke-width="1"/>
<!-- xampp -->
<rect x="993.200" y="1044" width="23.800" height="23.800" rx="3" fill="#f2711c"/><path d="M998 1050.500c1.500-2 4-2 5.500 0 .8 1 2.200 1 3 0 1.500-2 4-2 5.500 0s1 4.500-.8 5.400c1.800.9 2.300 3.400.8 5.400s-4 2-5.500 0c-.8-1-2.200-1-3 0-1.500 2-4 2-5.500 0s-1-4.500.8-5.400c-1.800-.9-2.300-3.400-.8-5.400z" fill="none" stroke="#fff" stroke-width="2.300"/>
<!-- chrome -->
<circle cx="1048.800" cy="1055.500" r="11.500" fill="#e33b2e"/><path d="M1048.800 1055.500l-10-5.700a11.500 11.500 0 0 0 4.300 15.700z" fill="#2da94f"/><path d="M1048.800 1055.500L1038.800 1049.800a11.500 11.500 0 0 0 5.800 16.400z" fill="#2da94f"/><path d="M1043 1065.500a11.500 11.500 0 0 0 17.300-10l-6.500-3.500-5 3.500z" fill="#fdd23e"/><path d="M1044.400 1066.100a11.500 11.500 0 0 0 15.900-10.600c0-1.500-.2-2.700-.7-4h-10.800z" fill="#fdd23e"/><path d="M1044.400 1066.100l4.400-10.600-10-5.700a11.500 11.500 0 0 0 5.600 16.300z" fill="#2da94f"/><circle cx="1048.800" cy="1055.500" r="5.300" fill="#fff"/><circle cx="1048.800" cy="1055.500" r="4.200" fill="#3f7fe8"/>
<rect x="1045.800" y="1072.400" width="6" height="2.600" rx="1.300" fill="#8c8c8c"/>
<!-- atom -->
<circle cx="1093.100" cy="1055.500" r="12" fill="#41b86d"/><g fill="none" stroke="#e8fff0" stroke-width="1.100"><ellipse cx="1093.100" cy="1055.500" rx="8.500" ry="3.300" transform="rotate(60 1093.100 1055.500)"/><ellipse cx="1093.100" cy="1055.500" rx="8.500" ry="3.300" transform="rotate(-60 1093.100 1055.500)"/><ellipse cx="1093.100" cy="1055.500" rx="8.500" ry="3.300"/></g><circle cx="1093.100" cy="1055.500" r="1.500" fill="#e8fff0"/>
<!-- cube -->
<path d="M1137 1044l11.300 5.500v12.500l-11.300 6-11.500-6v-12.500z" fill="#1d5fd0"/><path d="M1137 1044l11.300 5.500-11.300 5.500-11.500-5.500z" fill="#3f86ee"/><path d="M1137 1055v13l-11.500-6v-12.500z" fill="#1a50b8"/><path d="M1137 1049.500l5.700 2.800v6.200l-5.700 3-5.700-3v-6.200z" fill="#f49b2c"/><path d="M1137 1049.500l5.700 2.800-5.700 2.700-5.700-2.700z" fill="#fcb95a"/><path d="M1131.300 1044.500v23M1142.700 1046.800v18.500M1125.500 1055.800l11.500 6 11.300-6" stroke="#0f3c94" stroke-width=".7" fill="none"/>
<!-- slack -->
<circle cx="1180.600" cy="1055.500" r="11.600" fill="#fff"/><g stroke-width="2.600" stroke-linecap="round"><path d="M1178.500 1049.500v4.500" stroke="#36c5f0"/><path d="M1174.500 1053.800h1.200" stroke="#36c5f0"/><path d="M1182.800 1049.800v1" stroke="#2eb67d"/><path d="M1182.300 1053.600h4.500" stroke="#2eb67d"/><path d="M1182.800 1057v4.500" stroke="#ecb22e"/><path d="M1186.500 1057.400h.5" stroke="#ecb22e"/><path d="M1174.600 1057.400h4.300" stroke="#e01e5a"/><path d="M1178.500 1061v.6" stroke="#e01e5a"/></g>
<!-- inkscape -->
<path d="M1224.500 1044.500l11 10.500c.8.800.5 1.800-.5 2.200l-4 1.300-2 2.500-3-1-3 2-2.500-2.500-5.500-1.800c-1.200-.5-1.500-1.500-.7-2.300z" fill="#0a0a0a"/><path d="M1224.500 1045.500l4 4.500-2 1.500-2-1.500-2.500 1.500-1.500-1.800z" fill="#f4f4f4"/><path d="M1224.500 1044.500l11 10.500-4-1-3-5z" fill="#2a5a94" opacity=".7"/><path d="M1220 1063.500h6l1.500 2.500h-5zM1230.500 1060.500l2 1" stroke="#0a0a0a" stroke-width="1.500" fill="#0a0a0a"/>
<!-- fusion -->
<rect x="1249.500" y="1036" width="38.500" height="40" rx="4" fill="#2f2f2f"/><rect x="1283" y="1036" width="7.500" height="40" rx="3" fill="#2a2a2a"/>
<rect x="1256.700" y="1043.500" width="25" height="25" fill="#fbe4cb"/><path d="M1263.500 1047.500h11v4.500h-6.200v3.500h5.200v4.300h-5.200v6.200h-4.800z" fill="#ef8b22"/><path d="M1263.500 1047.500h4.800v18.500h-4.800z" fill="#d96e0e"/><path d="M1268.300 1047.500h6.200l-1.500 2h-4.700z" fill="#fbb35e"/><rect x="1274.500" y="1063.500" width="5.500" height="3" fill="#f2a657" opacity=".8"/>
<rect x="1260.800" y="1072.200" width="16.200" height="2.700" rx="1.350" fill="#4cc2ff"/>
<!-- settings -->
<g fill="#8d959f"><circle cx="1313" cy="1055.500" r="9"/><rect x="1309.800" y="1043.200" width="6.400" height="24.600" rx="1.500"/><rect x="1309.800" y="1043.200" width="6.400" height="24.600" rx="1.500" transform="rotate(60 1313 1055.500)"/><rect x="1309.800" y="1043.200" width="6.400" height="24.600" rx="1.500" transform="rotate(120 1313 1055.500)"/></g><circle cx="1313" cy="1055.500" r="5.400" fill="#1c1c1c"/><circle cx="1313" cy="1055.500" r="4.100" fill="#1b76de"/>
<rect x="1310" y="1072.400" width="6" height="2.600" rx="1.300" fill="#8c8c8c"/>
<!-- tray -->
<path d="M1668 1058.800l6-6 6 6" fill="none" stroke="#f0f0f0" stroke-width="1.300"/>
<g fill="none" stroke="#f0f0f0" stroke-width="1.200"><path d="M1698.500 1056a7.500 7.500 0 0 1 13.800-4.500"/><path d="M1713 1047.800v4h-4"/><path d="M1704 1063.300a7.500 7.500 0 0 1-5-3"/><path d="M1698.500 1064v-4h4"/></g><circle cx="1710" cy="1060" r="4.100" fill="#f59b0b"/>
<g fill="none" stroke="#f0f0f0" stroke-width="1.500" stroke-linecap="round"><path d="M1775 1054a10.500 10.500 0 0 1 14.400 0"/><path d="M1777.500 1056.700a7 7 0 0 1 9.400 0"/><path d="M1780 1059.200a3.400 3.400 0 0 1 4.400 0"/></g><circle cx="1782.200" cy="1060.800" r="1.200" fill="#f0f0f0"/>
<g fill="none" stroke="#f0f0f0" stroke-width="1.200"><path d="M1798.500 1053.500h3.200l4-3.500v11.500l-4-3.500h-3.200z" stroke-linejoin="round"/><path d="M1808 1053.300a3.500 3.500 0 0 1 0 5"/><path d="M1810 1051.300a6.300 6.300 0 0 1 0 9"/><path d="M1812.200 1049.500a9 9 0 0 1 0 12.500" stroke="#8a8a8a"/></g>
<g><rect x="1826.500" y="1051.500" width="10.500" height="8.500" rx="1.500" fill="#f0f0f0"/><rect x="1825" y="1050.300" width="12.800" height="10.800" rx="2" fill="none" stroke="#f0f0f0" stroke-width="1.100"/><rect x="1838.200" y="1053.500" width="1.500" height="4.500" fill="#f0f0f0"/><path d="M1823 1049.500v3M1825.500 1049.500v3M1822 1052.500h4.500v2.500h-4.500zM1824.200 1055v4.500h2" stroke="#f0f0f0" stroke-width="1" fill="#f0f0f0"/></g>
</svg>
<span class="t" style="left:1732.70px;top:11.80px;font-size:11.50px;line-height:11.50px;color:#fff;transform:scaleX(0.9028);">ENG</span>

<span class="t" style="left:1737.10px;top:27.60px;font-size:11.50px;line-height:11.50px;color:#fff;transform:scaleX(0.9076);">US</span>

<span class="t" style="left:1861.80px;top:11.21px;font-size:11.50px;line-height:11.50px;color:#fff;transform:scaleX(0.9924);">8:50 PM</span>

<span class="t" style="left:1853.50px;top:27.00px;font-size:11.50px;line-height:11.50px;color:#fff;transform:scaleX(1.0099);">2/11/2022</span>

</div>
</body></html>
